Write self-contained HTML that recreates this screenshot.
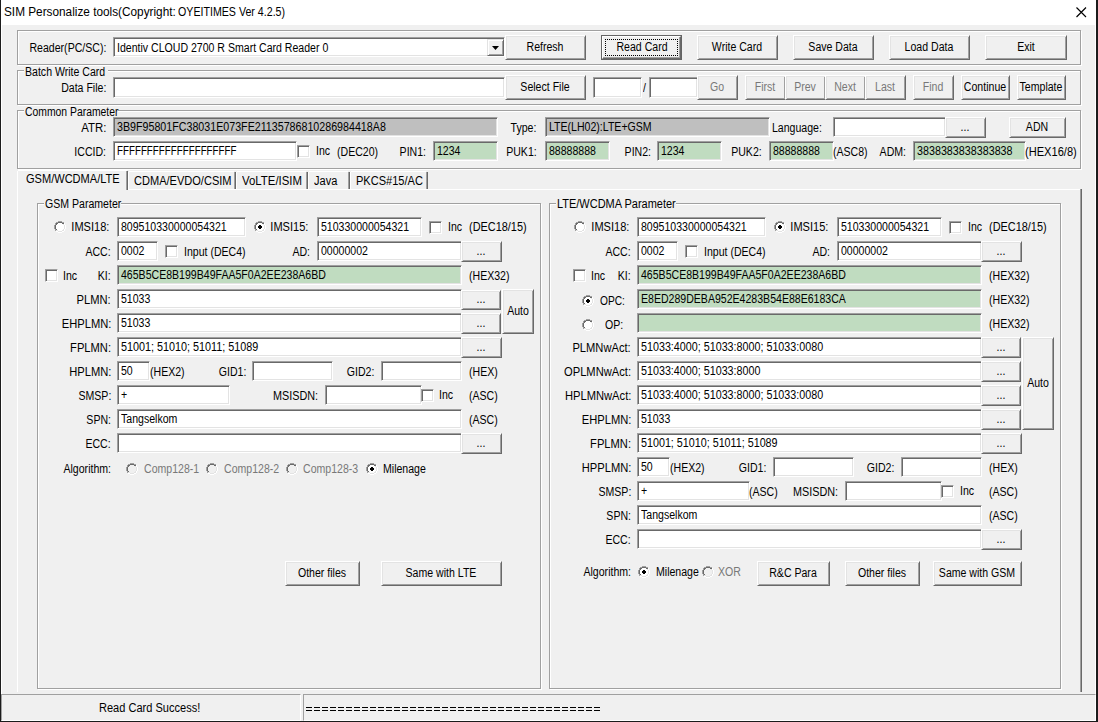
<!DOCTYPE html>
<html><head><meta charset="utf-8"><style>
html,body{margin:0;padding:0;width:1098px;height:722px;overflow:hidden;background:#f0f0f0}
body>div,body>svg{position:absolute;box-sizing:content-box}
.t{position:absolute;font-family:"Liberation Sans",sans-serif;font-size:12px;line-height:14px;white-space:pre;color:#000}
.c{text-align:center}
.tt{position:absolute;font-family:"Liberation Sans",sans-serif;font-size:12px;line-height:16px;white-space:pre;color:#000;transform:scaleX(0.937);transform-origin:0 0}
</style></head><body>
<div style="left:0px;top:0px;width:1098px;height:722px;background:#f0f0f0"></div>
<div style="left:0px;top:0px;width:1098px;height:25px;background:#fff"></div>
<div style="left:1px;top:25px;width:1px;height:669px;background:#fff"></div>
<div style="left:1095px;top:25px;width:1px;height:696px;background:#fff"></div>
<div class="tt" style="left:4px;top:4px;transform:scaleX(0.983)">SIM Personalize tools(Copyright: </div>
<div class="tt" style="left:178px;top:4px;transform:scaleX(0.887)">OYEITIMES Ver 4.2.5)</div>
<svg style="position:absolute;left:1076px;top:7px" width="11" height="11" viewBox="0 0 11 11"><path d="M0.5,0.5 L10,10 M10,0.5 L0.5,10" stroke="#000" stroke-width="1.15"/></svg>
<div style="left:18px;top:31px;width:1062px;height:33px;border:1px solid #ffffff"></div>
<div style="left:17px;top:30px;width:1062px;height:33px;border:1px solid #a0a0a0"></div>
<div class="t r" style="right:992px;top:41px;color:#000;transform:scaleX(0.88);transform-origin:100% 0">Reader(PC/SC):</div>
<div style="left:113px;top:37px;width:390px;height:18px;border:1px solid;border-color:#a0a0a0 #ffffff #ffffff #a0a0a0;background:#fff;box-shadow:inset 1px 1px #696969,inset -1px -1px #e3e3e3"></div>
<div class="t" style="left:117px;top:41px;color:#000;transform:scaleX(0.88);transform-origin:0 0">Identiv CLOUD 2700 R Smart Card Reader 0</div>
<div style="left:487px;top:39px;width:15px;height:15px;border:1px solid;border-color:#e3e3e3 #696969 #696969 #e3e3e3;background:#f0f0f0;box-shadow:inset 1px 1px #ffffff,inset -1px -1px #a0a0a0"></div>
<svg style="position:absolute;left:492px;top:46px" width="7" height="4" viewBox="0 0 7 4"><path d="M0,0 H7 L3.5,4 Z" fill="#000"/></svg>
<div style="left:505px;top:35px;width:79px;height:23px;border:1px solid;border-color:#ffffff #696969 #696969 #ffffff;background:#f0f0f0;box-shadow:inset 1px 1px #e3e3e3,inset -1px -1px #a0a0a0"></div>
<div class="t c" style="left:345px;width:400px;top:40px;color:#000;transform:scaleX(0.88);transform-origin:50% 0">Refresh</div>
<div style="left:601px;top:35px;width:79px;height:23px;border:1px solid #646464;background:#f0f0f0"></div>
<div style="left:602px;top:36px;width:77px;height:21px;border:1px solid;border-color:#ffffff #696969 #696969 #ffffff;box-shadow:inset -1px -1px #a0a0a0"></div>
<div style="left:605px;top:39px;width:71px;height:15px;border:1px dotted #000"></div>
<div class="t c" style="left:442px;width:400px;top:40px;color:#000;transform:scaleX(0.88);transform-origin:50% 0">Read Card</div>
<div style="left:697px;top:35px;width:79px;height:23px;border:1px solid;border-color:#ffffff #696969 #696969 #ffffff;background:#f0f0f0;box-shadow:inset 1px 1px #e3e3e3,inset -1px -1px #a0a0a0"></div>
<div class="t c" style="left:537px;width:400px;top:40px;color:#000;transform:scaleX(0.88);transform-origin:50% 0">Write Card</div>
<div style="left:793px;top:35px;width:79px;height:23px;border:1px solid;border-color:#ffffff #696969 #696969 #ffffff;background:#f0f0f0;box-shadow:inset 1px 1px #e3e3e3,inset -1px -1px #a0a0a0"></div>
<div class="t c" style="left:633px;width:400px;top:40px;color:#000;transform:scaleX(0.88);transform-origin:50% 0">Save Data</div>
<div style="left:889px;top:35px;width:79px;height:23px;border:1px solid;border-color:#ffffff #696969 #696969 #ffffff;background:#f0f0f0;box-shadow:inset 1px 1px #e3e3e3,inset -1px -1px #a0a0a0"></div>
<div class="t c" style="left:729px;width:400px;top:40px;color:#000;transform:scaleX(0.88);transform-origin:50% 0">Load Data</div>
<div style="left:985px;top:35px;width:80px;height:23px;border:1px solid;border-color:#ffffff #696969 #696969 #ffffff;background:#f0f0f0;box-shadow:inset 1px 1px #e3e3e3,inset -1px -1px #a0a0a0"></div>
<div class="t c" style="left:826px;width:400px;top:40px;color:#000;transform:scaleX(0.88);transform-origin:50% 0">Exit</div>
<div style="left:18px;top:71px;width:1062px;height:33px;border:1px solid #ffffff"></div>
<div style="left:17px;top:70px;width:1062px;height:33px;border:1px solid #a0a0a0"></div>
<div style="left:24px;top:69px;width:84px;height:4px;background:#f0f0f0"></div>
<div class="t" style="left:25px;top:65px;color:#000;transform:scaleX(0.88);transform-origin:0 0">Batch Write Card</div>
<div class="t r" style="right:992px;top:81px;color:#000;transform:scaleX(0.88);transform-origin:100% 0">Data File:</div>
<div style="left:113px;top:77px;width:390px;height:19px;border:1px solid;border-color:#a0a0a0 #ffffff #ffffff #a0a0a0;background:#fff;box-shadow:inset 1px 1px #696969,inset -1px -1px #e3e3e3"></div>
<div style="left:505px;top:75px;width:79px;height:23px;border:1px solid;border-color:#ffffff #696969 #696969 #ffffff;background:#f0f0f0;box-shadow:inset 1px 1px #e3e3e3,inset -1px -1px #a0a0a0"></div>
<div class="t c" style="left:345px;width:400px;top:80px;color:#000;transform:scaleX(0.88);transform-origin:50% 0">Select File</div>
<div style="left:593px;top:77px;width:47px;height:19px;border:1px solid;border-color:#a0a0a0 #ffffff #ffffff #a0a0a0;background:#fff;box-shadow:inset 1px 1px #696969,inset -1px -1px #e3e3e3"></div>
<div class="t" style="left:643px;top:81px;color:#000;transform:scaleX(0.88);transform-origin:0 0">/</div>
<div style="left:649px;top:77px;width:47px;height:19px;border:1px solid;border-color:#a0a0a0 #ffffff #ffffff #a0a0a0;background:#fff;box-shadow:inset 1px 1px #696969,inset -1px -1px #e3e3e3"></div>
<div style="left:697px;top:75px;width:39px;height:23px;border:1px solid;border-color:#ffffff #696969 #696969 #ffffff;background:#f0f0f0;box-shadow:inset 1px 1px #e3e3e3,inset -1px -1px #a0a0a0"></div>
<div class="t c" style="left:517px;width:400px;top:80px;color:#787878;transform:scaleX(0.88);transform-origin:50% 0">Go</div>
<div style="left:745px;top:75px;width:39px;height:23px;border:1px solid;border-color:#ffffff #696969 #696969 #ffffff;background:#f0f0f0;box-shadow:inset 1px 1px #e3e3e3,inset -1px -1px #a0a0a0"></div>
<div class="t c" style="left:565px;width:400px;top:80px;color:#787878;transform:scaleX(0.88);transform-origin:50% 0">First</div>
<div style="left:785px;top:75px;width:39px;height:23px;border:1px solid;border-color:#ffffff #696969 #696969 #ffffff;background:#f0f0f0;box-shadow:inset 1px 1px #e3e3e3,inset -1px -1px #a0a0a0"></div>
<div class="t c" style="left:605px;width:400px;top:80px;color:#787878;transform:scaleX(0.88);transform-origin:50% 0">Prev</div>
<div style="left:825px;top:75px;width:39px;height:23px;border:1px solid;border-color:#ffffff #696969 #696969 #ffffff;background:#f0f0f0;box-shadow:inset 1px 1px #e3e3e3,inset -1px -1px #a0a0a0"></div>
<div class="t c" style="left:645px;width:400px;top:80px;color:#787878;transform:scaleX(0.88);transform-origin:50% 0">Next</div>
<div style="left:865px;top:75px;width:39px;height:23px;border:1px solid;border-color:#ffffff #696969 #696969 #ffffff;background:#f0f0f0;box-shadow:inset 1px 1px #e3e3e3,inset -1px -1px #a0a0a0"></div>
<div class="t c" style="left:685px;width:400px;top:80px;color:#787878;transform:scaleX(0.88);transform-origin:50% 0">Last</div>
<div style="left:913px;top:75px;width:39px;height:23px;border:1px solid;border-color:#ffffff #696969 #696969 #ffffff;background:#f0f0f0;box-shadow:inset 1px 1px #e3e3e3,inset -1px -1px #a0a0a0"></div>
<div class="t c" style="left:733px;width:400px;top:80px;color:#787878;transform:scaleX(0.88);transform-origin:50% 0">Find</div>
<div style="left:961px;top:75px;width:47px;height:23px;border:1px solid;border-color:#ffffff #696969 #696969 #ffffff;background:#f0f0f0;box-shadow:inset 1px 1px #e3e3e3,inset -1px -1px #a0a0a0"></div>
<div class="t c" style="left:785px;width:400px;top:80px;color:#000;transform:scaleX(0.88);transform-origin:50% 0">Continue</div>
<div style="left:1017px;top:75px;width:47px;height:23px;border:1px solid;border-color:#ffffff #696969 #696969 #ffffff;background:#f0f0f0;box-shadow:inset 1px 1px #e3e3e3,inset -1px -1px #a0a0a0"></div>
<div class="t c" style="left:841px;width:400px;top:80px;color:#000;transform:scaleX(0.88);transform-origin:50% 0">Template</div>
<div style="left:18px;top:111px;width:1062px;height:57px;border:1px solid #ffffff"></div>
<div style="left:17px;top:110px;width:1062px;height:57px;border:1px solid #a0a0a0"></div>
<div style="left:24px;top:109px;width:94px;height:4px;background:#f0f0f0"></div>
<div class="t" style="left:25px;top:105px;color:#000;transform:scaleX(0.865);transform-origin:0 0">Common Parameter</div>
<div class="t r" style="right:992px;top:121px;color:#000;transform:scaleX(0.95);transform-origin:100% 0">ATR:</div>
<div style="left:113px;top:117px;width:383px;height:18px;border:1px solid;border-color:#a0a0a0 #ffffff #ffffff #a0a0a0;background:#bfbfbf;box-shadow:inset 1px 1px #696969,inset -1px -1px #e3e3e3"></div>
<div class="t" style="left:117px;top:120px;color:#000;transform:scaleX(0.89);transform-origin:0 0">3B9F95801FC38031E073FE21135786810286984418A8</div>
<div class="t r" style="right:562px;top:121px;color:#000;transform:scaleX(0.88);transform-origin:100% 0">Type:</div>
<div style="left:545px;top:117px;width:223px;height:18px;border:1px solid;border-color:#a0a0a0 #ffffff #ffffff #a0a0a0;background:#bfbfbf;box-shadow:inset 1px 1px #696969,inset -1px -1px #e3e3e3"></div>
<div class="t" style="left:549px;top:120px;color:#000;transform:scaleX(0.88);transform-origin:0 0">LTE(LH02):LTE+GSM</div>
<div class="t" style="left:772px;top:121px;color:#000;transform:scaleX(0.88);transform-origin:0 0">Language:</div>
<div style="left:833px;top:117px;width:111px;height:18px;border:1px solid;border-color:#a0a0a0 #ffffff #ffffff #a0a0a0;background:#fff;box-shadow:inset 1px 1px #696969,inset -1px -1px #e3e3e3"></div>
<div style="left:945px;top:117px;width:39px;height:19px;border:1px solid;border-color:#ffffff #696969 #696969 #ffffff;background:#f0f0f0;box-shadow:inset 1px 1px #e3e3e3,inset -1px -1px #a0a0a0"></div>
<div class="t c" style="left:765px;width:400px;top:120px;color:#000;transform:scaleX(0.88);transform-origin:50% 0">...</div>
<div style="left:1009px;top:117px;width:55px;height:19px;border:1px solid;border-color:#ffffff #696969 #696969 #ffffff;background:#f0f0f0;box-shadow:inset 1px 1px #e3e3e3,inset -1px -1px #a0a0a0"></div>
<div class="t c" style="left:837px;width:400px;top:120px;color:#000;transform:scaleX(0.88);transform-origin:50% 0">ADN</div>
<div class="t r" style="right:992px;top:145px;color:#000;transform:scaleX(0.88);transform-origin:100% 0">ICCID:</div>
<div style="left:113px;top:141px;width:182px;height:18px;border:1px solid;border-color:#a0a0a0 #ffffff #ffffff #a0a0a0;background:#fff;box-shadow:inset 1px 1px #696969,inset -1px -1px #e3e3e3"></div>
<div class="t" style="left:117px;top:144px;color:#000;transform:scaleX(0.815);transform-origin:0 0">FFFFFFFFFFFFFFFFFFFF</div>
<div style="left:297px;top:145px;width:11px;height:11px;border:1px solid;border-color:#a0a0a0 #ffffff #ffffff #a0a0a0;background:#fff;box-shadow:inset 1px 1px #696969,inset -1px -1px #e3e3e3"></div>
<div class="t" style="left:316px;top:144px;color:#000;transform:scaleX(0.88);transform-origin:0 0">Inc</div>
<div class="t" style="left:337px;top:145px;color:#000;transform:scaleX(0.88);transform-origin:0 0">(DEC20)</div>
<div class="t r" style="right:672px;top:145px;color:#000;transform:scaleX(0.88);transform-origin:100% 0">PIN1:</div>
<div style="left:433px;top:141px;width:63px;height:18px;border:1px solid;border-color:#a0a0a0 #ffffff #ffffff #a0a0a0;background:#c0dcc0;box-shadow:inset 1px 1px #696969,inset -1px -1px #e3e3e3"></div>
<div class="t" style="left:437px;top:144px;color:#000;transform:scaleX(0.88);transform-origin:0 0">1234</div>
<div class="t r" style="right:561px;top:145px;color:#000;transform:scaleX(0.88);transform-origin:100% 0">PUK1:</div>
<div style="left:545px;top:141px;width:63px;height:18px;border:1px solid;border-color:#a0a0a0 #ffffff #ffffff #a0a0a0;background:#c0dcc0;box-shadow:inset 1px 1px #696969,inset -1px -1px #e3e3e3"></div>
<div class="t" style="left:549px;top:144px;color:#000;transform:scaleX(0.88);transform-origin:0 0">88888888</div>
<div class="t r" style="right:447px;top:145px;color:#000;transform:scaleX(0.88);transform-origin:100% 0">PIN2:</div>
<div style="left:657px;top:141px;width:63px;height:18px;border:1px solid;border-color:#a0a0a0 #ffffff #ffffff #a0a0a0;background:#c0dcc0;box-shadow:inset 1px 1px #696969,inset -1px -1px #e3e3e3"></div>
<div class="t" style="left:661px;top:144px;color:#000;transform:scaleX(0.88);transform-origin:0 0">1234</div>
<div class="t r" style="right:336px;top:145px;color:#000;transform:scaleX(0.88);transform-origin:100% 0">PUK2:</div>
<div style="left:769px;top:141px;width:63px;height:18px;border:1px solid;border-color:#a0a0a0 #ffffff #ffffff #a0a0a0;background:#c0dcc0;box-shadow:inset 1px 1px #696969,inset -1px -1px #e3e3e3"></div>
<div class="t" style="left:773px;top:144px;color:#000;transform:scaleX(0.88);transform-origin:0 0">88888888</div>
<div class="t" style="left:833px;top:145px;color:#000;transform:scaleX(0.88);transform-origin:0 0">(ASC8)</div>
<div class="t r" style="right:192px;top:145px;color:#000;transform:scaleX(0.88);transform-origin:100% 0">ADM:</div>
<div style="left:913px;top:141px;width:111px;height:18px;border:1px solid;border-color:#a0a0a0 #ffffff #ffffff #a0a0a0;background:#c0dcc0;box-shadow:inset 1px 1px #696969,inset -1px -1px #e3e3e3"></div>
<div class="t" style="left:917px;top:144px;color:#000;transform:scaleX(0.895);transform-origin:0 0">3838383838383838</div>
<div class="t" style="left:1025px;top:145px;color:#000;transform:scaleX(0.925);transform-origin:0 0">(HEX16/8)</div>
<div style="left:17px;top:189px;width:1064px;height:1px;background:#ffffff"></div>
<div style="left:17px;top:189px;width:1px;height:503px;background:#ffffff"></div>
<div style="left:1080px;top:189px;width:1px;height:503px;background:#a0a0a0"></div>
<div style="left:1081px;top:189px;width:1px;height:503px;background:#696969"></div>
<div style="left:129px;top:171px;width:105px;height:1px;background:#ffffff"></div>
<div style="left:128px;top:172px;width:1px;height:17px;background:#ffffff"></div>
<div style="left:234px;top:172px;width:1px;height:17px;background:#a0a0a0"></div>
<div style="left:235px;top:172px;width:1px;height:17px;background:#696969"></div>
<div class="t" style="left:134px;top:174px;color:#000;transform:scaleX(0.92);transform-origin:0 0">CDMA/EVDO/CSIM</div>
<div style="left:237px;top:171px;width:69px;height:1px;background:#ffffff"></div>
<div style="left:236px;top:172px;width:1px;height:17px;background:#ffffff"></div>
<div style="left:306px;top:172px;width:1px;height:17px;background:#a0a0a0"></div>
<div style="left:307px;top:172px;width:1px;height:17px;background:#696969"></div>
<div class="t" style="left:242px;top:174px;color:#000;transform:scaleX(0.95);transform-origin:0 0">VoLTE/ISIM</div>
<div style="left:309px;top:171px;width:39px;height:1px;background:#ffffff"></div>
<div style="left:308px;top:172px;width:1px;height:17px;background:#ffffff"></div>
<div style="left:348px;top:172px;width:1px;height:17px;background:#a0a0a0"></div>
<div style="left:349px;top:172px;width:1px;height:17px;background:#696969"></div>
<div class="t" style="left:314px;top:174px;color:#000;transform:scaleX(0.92);transform-origin:0 0">Java</div>
<div style="left:351px;top:171px;width:75px;height:1px;background:#ffffff"></div>
<div style="left:350px;top:172px;width:1px;height:17px;background:#ffffff"></div>
<div style="left:426px;top:172px;width:1px;height:17px;background:#a0a0a0"></div>
<div style="left:427px;top:172px;width:1px;height:17px;background:#696969"></div>
<div class="t" style="left:356px;top:174px;color:#000;transform:scaleX(0.92);transform-origin:0 0">PKCS#15/AC</div>
<div style="left:17px;top:170px;width:111px;height:20px;background:#f0f0f0"></div>
<div style="left:18px;top:170px;width:109px;height:1px;background:#ffffff"></div>
<div style="left:17px;top:171px;width:1px;height:19px;background:#ffffff"></div>
<div style="left:126px;top:171px;width:1px;height:19px;background:#a0a0a0"></div>
<div style="left:127px;top:171px;width:1px;height:19px;background:#696969"></div>
<div class="t" style="left:26px;top:172px;color:#000;transform:scaleX(0.92);transform-origin:0 0">GSM/WCDMA/LTE</div>
<div style="left:38px;top:204px;width:502px;height:484px;border:1px solid #ffffff"></div>
<div style="left:37px;top:203px;width:502px;height:484px;border:1px solid #a0a0a0"></div>
<div style="left:44px;top:202px;width:77px;height:4px;background:#f0f0f0"></div>
<div class="t" style="left:45px;top:197px;color:#000;transform:scaleX(0.88);transform-origin:0 0">GSM Parameter</div>
<div style="left:550px;top:204px;width:510px;height:484px;border:1px solid #ffffff"></div>
<div style="left:549px;top:203px;width:510px;height:484px;border:1px solid #a0a0a0"></div>
<div style="left:556px;top:202px;width:120px;height:4px;background:#f0f0f0"></div>
<div class="t" style="left:557px;top:197px;color:#000;transform:scaleX(0.915);transform-origin:0 0">LTE/WCDMA Parameter</div>
<svg style="position:absolute;left:54px;top:221px" width="12" height="12" shape-rendering="crispEdges"><rect x="4" y="0" width="4" height="1" fill="#a0a0a0"/><rect x="2" y="1" width="2" height="1" fill="#a0a0a0"/><rect x="4" y="1" width="4" height="1" fill="#696969"/><rect x="8" y="1" width="2" height="1" fill="#a0a0a0"/><rect x="1" y="2" width="1" height="1" fill="#a0a0a0"/><rect x="2" y="2" width="2" height="1" fill="#696969"/><rect x="4" y="2" width="4" height="1" fill="#fff"/><rect x="8" y="2" width="2" height="1" fill="#696969"/><rect x="10" y="2" width="1" height="1" fill="#ffffff"/><rect x="1" y="3" width="1" height="1" fill="#a0a0a0"/><rect x="2" y="3" width="1" height="1" fill="#696969"/><rect x="3" y="3" width="6" height="1" fill="#fff"/><rect x="9" y="3" width="1" height="1" fill="#e3e3e3"/><rect x="10" y="3" width="1" height="1" fill="#ffffff"/><rect x="0" y="4" width="1" height="1" fill="#a0a0a0"/><rect x="1" y="4" width="1" height="1" fill="#696969"/><rect x="2" y="4" width="8" height="1" fill="#fff"/><rect x="10" y="4" width="1" height="1" fill="#e3e3e3"/><rect x="11" y="4" width="1" height="1" fill="#ffffff"/><rect x="0" y="5" width="1" height="1" fill="#a0a0a0"/><rect x="1" y="5" width="1" height="1" fill="#696969"/><rect x="2" y="5" width="8" height="1" fill="#fff"/><rect x="10" y="5" width="1" height="1" fill="#e3e3e3"/><rect x="11" y="5" width="1" height="1" fill="#ffffff"/><rect x="0" y="6" width="1" height="1" fill="#a0a0a0"/><rect x="1" y="6" width="1" height="1" fill="#696969"/><rect x="2" y="6" width="8" height="1" fill="#fff"/><rect x="10" y="6" width="1" height="1" fill="#e3e3e3"/><rect x="11" y="6" width="1" height="1" fill="#ffffff"/><rect x="0" y="7" width="1" height="1" fill="#a0a0a0"/><rect x="1" y="7" width="1" height="1" fill="#696969"/><rect x="2" y="7" width="8" height="1" fill="#fff"/><rect x="10" y="7" width="1" height="1" fill="#e3e3e3"/><rect x="11" y="7" width="1" height="1" fill="#ffffff"/><rect x="1" y="8" width="1" height="1" fill="#a0a0a0"/><rect x="2" y="8" width="1" height="1" fill="#696969"/><rect x="3" y="8" width="6" height="1" fill="#fff"/><rect x="9" y="8" width="1" height="1" fill="#e3e3e3"/><rect x="10" y="8" width="1" height="1" fill="#ffffff"/><rect x="1" y="9" width="1" height="1" fill="#a0a0a0"/><rect x="2" y="9" width="2" height="1" fill="#e3e3e3"/><rect x="4" y="9" width="4" height="1" fill="#fff"/><rect x="8" y="9" width="2" height="1" fill="#e3e3e3"/><rect x="10" y="9" width="1" height="1" fill="#ffffff"/><rect x="2" y="10" width="2" height="1" fill="#ffffff"/><rect x="4" y="10" width="4" height="1" fill="#e3e3e3"/><rect x="8" y="10" width="2" height="1" fill="#ffffff"/><rect x="4" y="11" width="4" height="1" fill="#ffffff"/></svg>
<div class="t r" style="right:989px;top:220px;color:#000;transform:scaleX(0.92);transform-origin:100% 0">IMSI18:</div>
<div style="left:117px;top:217px;width:127px;height:18px;border:1px solid;border-color:#a0a0a0 #ffffff #ffffff #a0a0a0;background:#fff;box-shadow:inset 1px 1px #696969,inset -1px -1px #e3e3e3"></div>
<div class="t" style="left:121px;top:220px;color:#000;transform:scaleX(0.88);transform-origin:0 0">809510330000054321</div>
<svg style="position:absolute;left:254px;top:221px" width="12" height="12" shape-rendering="crispEdges"><rect x="4" y="0" width="4" height="1" fill="#a0a0a0"/><rect x="2" y="1" width="2" height="1" fill="#a0a0a0"/><rect x="4" y="1" width="4" height="1" fill="#696969"/><rect x="8" y="1" width="2" height="1" fill="#a0a0a0"/><rect x="1" y="2" width="1" height="1" fill="#a0a0a0"/><rect x="2" y="2" width="2" height="1" fill="#696969"/><rect x="4" y="2" width="4" height="1" fill="#fff"/><rect x="8" y="2" width="2" height="1" fill="#696969"/><rect x="10" y="2" width="1" height="1" fill="#ffffff"/><rect x="1" y="3" width="1" height="1" fill="#a0a0a0"/><rect x="2" y="3" width="1" height="1" fill="#696969"/><rect x="3" y="3" width="6" height="1" fill="#fff"/><rect x="9" y="3" width="1" height="1" fill="#e3e3e3"/><rect x="10" y="3" width="1" height="1" fill="#ffffff"/><rect x="0" y="4" width="1" height="1" fill="#a0a0a0"/><rect x="1" y="4" width="1" height="1" fill="#696969"/><rect x="2" y="4" width="8" height="1" fill="#fff"/><rect x="10" y="4" width="1" height="1" fill="#e3e3e3"/><rect x="11" y="4" width="1" height="1" fill="#ffffff"/><rect x="0" y="5" width="1" height="1" fill="#a0a0a0"/><rect x="1" y="5" width="1" height="1" fill="#696969"/><rect x="2" y="5" width="8" height="1" fill="#fff"/><rect x="10" y="5" width="1" height="1" fill="#e3e3e3"/><rect x="11" y="5" width="1" height="1" fill="#ffffff"/><rect x="0" y="6" width="1" height="1" fill="#a0a0a0"/><rect x="1" y="6" width="1" height="1" fill="#696969"/><rect x="2" y="6" width="8" height="1" fill="#fff"/><rect x="10" y="6" width="1" height="1" fill="#e3e3e3"/><rect x="11" y="6" width="1" height="1" fill="#ffffff"/><rect x="0" y="7" width="1" height="1" fill="#a0a0a0"/><rect x="1" y="7" width="1" height="1" fill="#696969"/><rect x="2" y="7" width="8" height="1" fill="#fff"/><rect x="10" y="7" width="1" height="1" fill="#e3e3e3"/><rect x="11" y="7" width="1" height="1" fill="#ffffff"/><rect x="1" y="8" width="1" height="1" fill="#a0a0a0"/><rect x="2" y="8" width="1" height="1" fill="#696969"/><rect x="3" y="8" width="6" height="1" fill="#fff"/><rect x="9" y="8" width="1" height="1" fill="#e3e3e3"/><rect x="10" y="8" width="1" height="1" fill="#ffffff"/><rect x="1" y="9" width="1" height="1" fill="#a0a0a0"/><rect x="2" y="9" width="2" height="1" fill="#e3e3e3"/><rect x="4" y="9" width="4" height="1" fill="#fff"/><rect x="8" y="9" width="2" height="1" fill="#e3e3e3"/><rect x="10" y="9" width="1" height="1" fill="#ffffff"/><rect x="2" y="10" width="2" height="1" fill="#ffffff"/><rect x="4" y="10" width="4" height="1" fill="#e3e3e3"/><rect x="8" y="10" width="2" height="1" fill="#ffffff"/><rect x="4" y="11" width="4" height="1" fill="#ffffff"/><rect x="5" y="4" width="2" height="4" fill="#000"/><rect x="4" y="5" width="4" height="2" fill="#000"/></svg>
<div class="t r" style="right:790px;top:220px;color:#000;transform:scaleX(0.92);transform-origin:100% 0">IMSI15:</div>
<div style="left:317px;top:217px;width:103px;height:18px;border:1px solid;border-color:#a0a0a0 #ffffff #ffffff #a0a0a0;background:#fff;box-shadow:inset 1px 1px #696969,inset -1px -1px #e3e3e3"></div>
<div class="t" style="left:321px;top:220px;color:#000;transform:scaleX(0.88);transform-origin:0 0">510330000054321</div>
<div style="left:429px;top:221px;width:11px;height:11px;border:1px solid;border-color:#a0a0a0 #ffffff #ffffff #a0a0a0;background:#fff;box-shadow:inset 1px 1px #696969,inset -1px -1px #e3e3e3"></div>
<div class="t" style="left:448px;top:220px;color:#000;transform:scaleX(0.88);transform-origin:0 0">Inc</div>
<div class="t" style="left:469px;top:220px;color:#000;transform:scaleX(0.91);transform-origin:0 0">(DEC18/15)</div>
<div class="t r" style="right:987px;top:245px;color:#000;transform:scaleX(0.88);transform-origin:100% 0">ACC:</div>
<div style="left:117px;top:241px;width:39px;height:18px;border:1px solid;border-color:#a0a0a0 #ffffff #ffffff #a0a0a0;background:#fff;box-shadow:inset 1px 1px #696969,inset -1px -1px #e3e3e3"></div>
<div class="t" style="left:121px;top:244px;color:#000;transform:scaleX(0.88);transform-origin:0 0">0002</div>
<div style="left:165px;top:245px;width:11px;height:11px;border:1px solid;border-color:#a0a0a0 #ffffff #ffffff #a0a0a0;background:#fff;box-shadow:inset 1px 1px #696969,inset -1px -1px #e3e3e3"></div>
<div class="t" style="left:184px;top:245px;color:#000;transform:scaleX(0.88);transform-origin:0 0">Input (DEC4)</div>
<div class="t r" style="right:788px;top:245px;color:#000;transform:scaleX(0.88);transform-origin:100% 0">AD:</div>
<div style="left:317px;top:241px;width:143px;height:18px;border:1px solid;border-color:#a0a0a0 #ffffff #ffffff #a0a0a0;background:#fff;box-shadow:inset 1px 1px #696969,inset -1px -1px #e3e3e3"></div>
<div class="t" style="left:321px;top:244px;color:#000;transform:scaleX(0.88);transform-origin:0 0">00000002</div>
<div style="left:461px;top:241px;width:39px;height:19px;border:1px solid;border-color:#ffffff #696969 #696969 #ffffff;background:#f0f0f0;box-shadow:inset 1px 1px #e3e3e3,inset -1px -1px #a0a0a0"></div>
<div class="t c" style="left:281px;width:400px;top:244px;color:#000;transform:scaleX(0.88);transform-origin:50% 0">...</div>
<div style="left:45px;top:269px;width:11px;height:11px;border:1px solid;border-color:#a0a0a0 #ffffff #ffffff #a0a0a0;background:#fff;box-shadow:inset 1px 1px #696969,inset -1px -1px #e3e3e3"></div>
<div class="t" style="left:63px;top:269px;color:#000;transform:scaleX(0.88);transform-origin:0 0">Inc</div>
<div class="t r" style="right:987px;top:269px;color:#000;transform:scaleX(0.88);transform-origin:100% 0">KI:</div>
<div style="left:117px;top:265px;width:343px;height:18px;border:1px solid;border-color:#a0a0a0 #ffffff #ffffff #a0a0a0;background:#c0dcc0;box-shadow:inset 1px 1px #696969,inset -1px -1px #e3e3e3"></div>
<div class="t" style="left:121px;top:268px;color:#000;transform:scaleX(0.88);transform-origin:0 0">465B5CE8B199B49FAA5F0A2EE238A6BD</div>
<div class="t" style="left:469px;top:269px;color:#000;transform:scaleX(0.88);transform-origin:0 0">(HEX32)</div>
<div class="t r" style="right:987px;top:293px;color:#000;transform:scaleX(0.93);transform-origin:100% 0">PLMN:</div>
<div style="left:117px;top:289px;width:343px;height:18px;border:1px solid;border-color:#a0a0a0 #ffffff #ffffff #a0a0a0;background:#fff;box-shadow:inset 1px 1px #696969,inset -1px -1px #e3e3e3"></div>
<div class="t" style="left:121px;top:292px;color:#000;transform:scaleX(0.88);transform-origin:0 0">51033</div>
<div style="left:461px;top:290px;width:38px;height:18px;border:1px solid;border-color:#ffffff #696969 #696969 #ffffff;background:#f0f0f0;box-shadow:inset 1px 1px #e3e3e3,inset -1px -1px #a0a0a0"></div>
<div class="t c" style="left:281px;width:400px;top:292px;color:#000;transform:scaleX(0.88);transform-origin:50% 0">...</div>
<div class="t r" style="right:987px;top:317px;color:#000;transform:scaleX(0.93);transform-origin:100% 0">EHPLMN:</div>
<div style="left:117px;top:313px;width:343px;height:18px;border:1px solid;border-color:#a0a0a0 #ffffff #ffffff #a0a0a0;background:#fff;box-shadow:inset 1px 1px #696969,inset -1px -1px #e3e3e3"></div>
<div class="t" style="left:121px;top:316px;color:#000;transform:scaleX(0.88);transform-origin:0 0">51033</div>
<div style="left:461px;top:313px;width:38px;height:19px;border:1px solid;border-color:#ffffff #696969 #696969 #ffffff;background:#f0f0f0;box-shadow:inset 1px 1px #e3e3e3,inset -1px -1px #a0a0a0"></div>
<div class="t c" style="left:281px;width:400px;top:316px;color:#000;transform:scaleX(0.88);transform-origin:50% 0">...</div>
<div class="t r" style="right:987px;top:341px;color:#000;transform:scaleX(0.93);transform-origin:100% 0">FPLMN:</div>
<div style="left:117px;top:337px;width:343px;height:18px;border:1px solid;border-color:#a0a0a0 #ffffff #ffffff #a0a0a0;background:#fff;box-shadow:inset 1px 1px #696969,inset -1px -1px #e3e3e3"></div>
<div class="t" style="left:121px;top:340px;color:#000;transform:scaleX(0.9);transform-origin:0 0">51001; 51010; 51011; 51089</div>
<div style="left:461px;top:337px;width:39px;height:19px;border:1px solid;border-color:#ffffff #696969 #696969 #ffffff;background:#f0f0f0;box-shadow:inset 1px 1px #e3e3e3,inset -1px -1px #a0a0a0"></div>
<div class="t c" style="left:281px;width:400px;top:340px;color:#000;transform:scaleX(0.88);transform-origin:50% 0">...</div>
<div style="left:502px;top:289px;width:30px;height:43px;border:1px solid;border-color:#ffffff #696969 #696969 #ffffff;background:#f0f0f0;box-shadow:inset 1px 1px #e3e3e3,inset -1px -1px #a0a0a0"></div>
<div class="t c" style="left:318px;width:400px;top:304px;color:#000;transform:scaleX(0.88);transform-origin:50% 0">Auto</div>
<div class="t r" style="right:987px;top:365px;color:#000;transform:scaleX(0.93);transform-origin:100% 0">HPLMN:</div>
<div style="left:117px;top:361px;width:31px;height:18px;border:1px solid;border-color:#a0a0a0 #ffffff #ffffff #a0a0a0;background:#fff;box-shadow:inset 1px 1px #696969,inset -1px -1px #e3e3e3"></div>
<div class="t" style="left:121px;top:364px;color:#000;transform:scaleX(0.88);transform-origin:0 0">50</div>
<div class="t" style="left:150px;top:365px;color:#000;transform:scaleX(0.88);transform-origin:0 0">(HEX2)</div>
<div class="t r" style="right:852px;top:365px;color:#000;transform:scaleX(0.88);transform-origin:100% 0">GID1:</div>
<div style="left:252px;top:361px;width:79px;height:18px;border:1px solid;border-color:#a0a0a0 #ffffff #ffffff #a0a0a0;background:#fff;box-shadow:inset 1px 1px #696969,inset -1px -1px #e3e3e3"></div>
<div class="t r" style="right:724px;top:365px;color:#000;transform:scaleX(0.88);transform-origin:100% 0">GID2:</div>
<div style="left:381px;top:361px;width:79px;height:18px;border:1px solid;border-color:#a0a0a0 #ffffff #ffffff #a0a0a0;background:#fff;box-shadow:inset 1px 1px #696969,inset -1px -1px #e3e3e3"></div>
<div class="t" style="left:469px;top:365px;color:#000;transform:scaleX(0.88);transform-origin:0 0">(HEX)</div>
<div class="t r" style="right:987px;top:389px;color:#000;transform:scaleX(0.88);transform-origin:100% 0">SMSP:</div>
<div style="left:117px;top:385px;width:111px;height:18px;border:1px solid;border-color:#a0a0a0 #ffffff #ffffff #a0a0a0;background:#fff;box-shadow:inset 1px 1px #696969,inset -1px -1px #e3e3e3"></div>
<div class="t" style="left:121px;top:388px;color:#000;transform:scaleX(0.88);transform-origin:0 0">+</div>
<div class="t r" style="right:780px;top:389px;color:#000;transform:scaleX(0.9);transform-origin:100% 0">MSISDN:</div>
<div style="left:325px;top:385px;width:95px;height:18px;border:1px solid;border-color:#a0a0a0 #ffffff #ffffff #a0a0a0;background:#fff;box-shadow:inset 1px 1px #696969,inset -1px -1px #e3e3e3"></div>
<div style="left:421px;top:389px;width:11px;height:11px;border:1px solid;border-color:#a0a0a0 #ffffff #ffffff #a0a0a0;background:#fff;box-shadow:inset 1px 1px #696969,inset -1px -1px #e3e3e3"></div>
<div class="t" style="left:439px;top:388px;color:#000;transform:scaleX(0.88);transform-origin:0 0">Inc</div>
<div class="t" style="left:469px;top:389px;color:#000;transform:scaleX(0.88);transform-origin:0 0">(ASC)</div>
<div class="t r" style="right:987px;top:413px;color:#000;transform:scaleX(0.88);transform-origin:100% 0">SPN:</div>
<div style="left:117px;top:409px;width:343px;height:18px;border:1px solid;border-color:#a0a0a0 #ffffff #ffffff #a0a0a0;background:#fff;box-shadow:inset 1px 1px #696969,inset -1px -1px #e3e3e3"></div>
<div class="t" style="left:121px;top:412px;color:#000;transform:scaleX(0.88);transform-origin:0 0">Tangselkom</div>
<div class="t" style="left:469px;top:413px;color:#000;transform:scaleX(0.88);transform-origin:0 0">(ASC)</div>
<div class="t r" style="right:987px;top:437px;color:#000;transform:scaleX(0.88);transform-origin:100% 0">ECC:</div>
<div style="left:117px;top:433px;width:343px;height:18px;border:1px solid;border-color:#a0a0a0 #ffffff #ffffff #a0a0a0;background:#fff;box-shadow:inset 1px 1px #696969,inset -1px -1px #e3e3e3"></div>
<div style="left:461px;top:433px;width:39px;height:19px;border:1px solid;border-color:#ffffff #696969 #696969 #ffffff;background:#f0f0f0;box-shadow:inset 1px 1px #e3e3e3,inset -1px -1px #a0a0a0"></div>
<div class="t c" style="left:281px;width:400px;top:436px;color:#000;transform:scaleX(0.88);transform-origin:50% 0">...</div>
<div class="t r" style="right:987px;top:462px;color:#000;transform:scaleX(0.88);transform-origin:100% 0">Algorithm:</div>
<svg style="position:absolute;left:126px;top:463px" width="12" height="12" shape-rendering="crispEdges"><rect x="4" y="0" width="4" height="1" fill="#a0a0a0"/><rect x="2" y="1" width="2" height="1" fill="#a0a0a0"/><rect x="4" y="1" width="4" height="1" fill="#696969"/><rect x="8" y="1" width="2" height="1" fill="#a0a0a0"/><rect x="1" y="2" width="1" height="1" fill="#a0a0a0"/><rect x="2" y="2" width="2" height="1" fill="#696969"/><rect x="4" y="2" width="4" height="1" fill="#f0f0f0"/><rect x="8" y="2" width="2" height="1" fill="#696969"/><rect x="10" y="2" width="1" height="1" fill="#ffffff"/><rect x="1" y="3" width="1" height="1" fill="#a0a0a0"/><rect x="2" y="3" width="1" height="1" fill="#696969"/><rect x="3" y="3" width="6" height="1" fill="#f0f0f0"/><rect x="9" y="3" width="1" height="1" fill="#e3e3e3"/><rect x="10" y="3" width="1" height="1" fill="#ffffff"/><rect x="0" y="4" width="1" height="1" fill="#a0a0a0"/><rect x="1" y="4" width="1" height="1" fill="#696969"/><rect x="2" y="4" width="8" height="1" fill="#f0f0f0"/><rect x="10" y="4" width="1" height="1" fill="#e3e3e3"/><rect x="11" y="4" width="1" height="1" fill="#ffffff"/><rect x="0" y="5" width="1" height="1" fill="#a0a0a0"/><rect x="1" y="5" width="1" height="1" fill="#696969"/><rect x="2" y="5" width="8" height="1" fill="#f0f0f0"/><rect x="10" y="5" width="1" height="1" fill="#e3e3e3"/><rect x="11" y="5" width="1" height="1" fill="#ffffff"/><rect x="0" y="6" width="1" height="1" fill="#a0a0a0"/><rect x="1" y="6" width="1" height="1" fill="#696969"/><rect x="2" y="6" width="8" height="1" fill="#f0f0f0"/><rect x="10" y="6" width="1" height="1" fill="#e3e3e3"/><rect x="11" y="6" width="1" height="1" fill="#ffffff"/><rect x="0" y="7" width="1" height="1" fill="#a0a0a0"/><rect x="1" y="7" width="1" height="1" fill="#696969"/><rect x="2" y="7" width="8" height="1" fill="#f0f0f0"/><rect x="10" y="7" width="1" height="1" fill="#e3e3e3"/><rect x="11" y="7" width="1" height="1" fill="#ffffff"/><rect x="1" y="8" width="1" height="1" fill="#a0a0a0"/><rect x="2" y="8" width="1" height="1" fill="#696969"/><rect x="3" y="8" width="6" height="1" fill="#f0f0f0"/><rect x="9" y="8" width="1" height="1" fill="#e3e3e3"/><rect x="10" y="8" width="1" height="1" fill="#ffffff"/><rect x="1" y="9" width="1" height="1" fill="#a0a0a0"/><rect x="2" y="9" width="2" height="1" fill="#e3e3e3"/><rect x="4" y="9" width="4" height="1" fill="#f0f0f0"/><rect x="8" y="9" width="2" height="1" fill="#e3e3e3"/><rect x="10" y="9" width="1" height="1" fill="#ffffff"/><rect x="2" y="10" width="2" height="1" fill="#ffffff"/><rect x="4" y="10" width="4" height="1" fill="#e3e3e3"/><rect x="8" y="10" width="2" height="1" fill="#ffffff"/><rect x="4" y="11" width="4" height="1" fill="#ffffff"/></svg>
<div class="t" style="left:144px;top:462px;color:#787878;transform:scaleX(0.88);transform-origin:0 0">Comp128-1</div>
<svg style="position:absolute;left:206px;top:463px" width="12" height="12" shape-rendering="crispEdges"><rect x="4" y="0" width="4" height="1" fill="#a0a0a0"/><rect x="2" y="1" width="2" height="1" fill="#a0a0a0"/><rect x="4" y="1" width="4" height="1" fill="#696969"/><rect x="8" y="1" width="2" height="1" fill="#a0a0a0"/><rect x="1" y="2" width="1" height="1" fill="#a0a0a0"/><rect x="2" y="2" width="2" height="1" fill="#696969"/><rect x="4" y="2" width="4" height="1" fill="#f0f0f0"/><rect x="8" y="2" width="2" height="1" fill="#696969"/><rect x="10" y="2" width="1" height="1" fill="#ffffff"/><rect x="1" y="3" width="1" height="1" fill="#a0a0a0"/><rect x="2" y="3" width="1" height="1" fill="#696969"/><rect x="3" y="3" width="6" height="1" fill="#f0f0f0"/><rect x="9" y="3" width="1" height="1" fill="#e3e3e3"/><rect x="10" y="3" width="1" height="1" fill="#ffffff"/><rect x="0" y="4" width="1" height="1" fill="#a0a0a0"/><rect x="1" y="4" width="1" height="1" fill="#696969"/><rect x="2" y="4" width="8" height="1" fill="#f0f0f0"/><rect x="10" y="4" width="1" height="1" fill="#e3e3e3"/><rect x="11" y="4" width="1" height="1" fill="#ffffff"/><rect x="0" y="5" width="1" height="1" fill="#a0a0a0"/><rect x="1" y="5" width="1" height="1" fill="#696969"/><rect x="2" y="5" width="8" height="1" fill="#f0f0f0"/><rect x="10" y="5" width="1" height="1" fill="#e3e3e3"/><rect x="11" y="5" width="1" height="1" fill="#ffffff"/><rect x="0" y="6" width="1" height="1" fill="#a0a0a0"/><rect x="1" y="6" width="1" height="1" fill="#696969"/><rect x="2" y="6" width="8" height="1" fill="#f0f0f0"/><rect x="10" y="6" width="1" height="1" fill="#e3e3e3"/><rect x="11" y="6" width="1" height="1" fill="#ffffff"/><rect x="0" y="7" width="1" height="1" fill="#a0a0a0"/><rect x="1" y="7" width="1" height="1" fill="#696969"/><rect x="2" y="7" width="8" height="1" fill="#f0f0f0"/><rect x="10" y="7" width="1" height="1" fill="#e3e3e3"/><rect x="11" y="7" width="1" height="1" fill="#ffffff"/><rect x="1" y="8" width="1" height="1" fill="#a0a0a0"/><rect x="2" y="8" width="1" height="1" fill="#696969"/><rect x="3" y="8" width="6" height="1" fill="#f0f0f0"/><rect x="9" y="8" width="1" height="1" fill="#e3e3e3"/><rect x="10" y="8" width="1" height="1" fill="#ffffff"/><rect x="1" y="9" width="1" height="1" fill="#a0a0a0"/><rect x="2" y="9" width="2" height="1" fill="#e3e3e3"/><rect x="4" y="9" width="4" height="1" fill="#f0f0f0"/><rect x="8" y="9" width="2" height="1" fill="#e3e3e3"/><rect x="10" y="9" width="1" height="1" fill="#ffffff"/><rect x="2" y="10" width="2" height="1" fill="#ffffff"/><rect x="4" y="10" width="4" height="1" fill="#e3e3e3"/><rect x="8" y="10" width="2" height="1" fill="#ffffff"/><rect x="4" y="11" width="4" height="1" fill="#ffffff"/></svg>
<div class="t" style="left:224px;top:462px;color:#787878;transform:scaleX(0.88);transform-origin:0 0">Comp128-2</div>
<svg style="position:absolute;left:286px;top:463px" width="12" height="12" shape-rendering="crispEdges"><rect x="4" y="0" width="4" height="1" fill="#a0a0a0"/><rect x="2" y="1" width="2" height="1" fill="#a0a0a0"/><rect x="4" y="1" width="4" height="1" fill="#696969"/><rect x="8" y="1" width="2" height="1" fill="#a0a0a0"/><rect x="1" y="2" width="1" height="1" fill="#a0a0a0"/><rect x="2" y="2" width="2" height="1" fill="#696969"/><rect x="4" y="2" width="4" height="1" fill="#f0f0f0"/><rect x="8" y="2" width="2" height="1" fill="#696969"/><rect x="10" y="2" width="1" height="1" fill="#ffffff"/><rect x="1" y="3" width="1" height="1" fill="#a0a0a0"/><rect x="2" y="3" width="1" height="1" fill="#696969"/><rect x="3" y="3" width="6" height="1" fill="#f0f0f0"/><rect x="9" y="3" width="1" height="1" fill="#e3e3e3"/><rect x="10" y="3" width="1" height="1" fill="#ffffff"/><rect x="0" y="4" width="1" height="1" fill="#a0a0a0"/><rect x="1" y="4" width="1" height="1" fill="#696969"/><rect x="2" y="4" width="8" height="1" fill="#f0f0f0"/><rect x="10" y="4" width="1" height="1" fill="#e3e3e3"/><rect x="11" y="4" width="1" height="1" fill="#ffffff"/><rect x="0" y="5" width="1" height="1" fill="#a0a0a0"/><rect x="1" y="5" width="1" height="1" fill="#696969"/><rect x="2" y="5" width="8" height="1" fill="#f0f0f0"/><rect x="10" y="5" width="1" height="1" fill="#e3e3e3"/><rect x="11" y="5" width="1" height="1" fill="#ffffff"/><rect x="0" y="6" width="1" height="1" fill="#a0a0a0"/><rect x="1" y="6" width="1" height="1" fill="#696969"/><rect x="2" y="6" width="8" height="1" fill="#f0f0f0"/><rect x="10" y="6" width="1" height="1" fill="#e3e3e3"/><rect x="11" y="6" width="1" height="1" fill="#ffffff"/><rect x="0" y="7" width="1" height="1" fill="#a0a0a0"/><rect x="1" y="7" width="1" height="1" fill="#696969"/><rect x="2" y="7" width="8" height="1" fill="#f0f0f0"/><rect x="10" y="7" width="1" height="1" fill="#e3e3e3"/><rect x="11" y="7" width="1" height="1" fill="#ffffff"/><rect x="1" y="8" width="1" height="1" fill="#a0a0a0"/><rect x="2" y="8" width="1" height="1" fill="#696969"/><rect x="3" y="8" width="6" height="1" fill="#f0f0f0"/><rect x="9" y="8" width="1" height="1" fill="#e3e3e3"/><rect x="10" y="8" width="1" height="1" fill="#ffffff"/><rect x="1" y="9" width="1" height="1" fill="#a0a0a0"/><rect x="2" y="9" width="2" height="1" fill="#e3e3e3"/><rect x="4" y="9" width="4" height="1" fill="#f0f0f0"/><rect x="8" y="9" width="2" height="1" fill="#e3e3e3"/><rect x="10" y="9" width="1" height="1" fill="#ffffff"/><rect x="2" y="10" width="2" height="1" fill="#ffffff"/><rect x="4" y="10" width="4" height="1" fill="#e3e3e3"/><rect x="8" y="10" width="2" height="1" fill="#ffffff"/><rect x="4" y="11" width="4" height="1" fill="#ffffff"/></svg>
<div class="t" style="left:303px;top:462px;color:#787878;transform:scaleX(0.88);transform-origin:0 0">Comp128-3</div>
<svg style="position:absolute;left:366px;top:463px" width="12" height="12" shape-rendering="crispEdges"><rect x="4" y="0" width="4" height="1" fill="#a0a0a0"/><rect x="2" y="1" width="2" height="1" fill="#a0a0a0"/><rect x="4" y="1" width="4" height="1" fill="#696969"/><rect x="8" y="1" width="2" height="1" fill="#a0a0a0"/><rect x="1" y="2" width="1" height="1" fill="#a0a0a0"/><rect x="2" y="2" width="2" height="1" fill="#696969"/><rect x="4" y="2" width="4" height="1" fill="#fff"/><rect x="8" y="2" width="2" height="1" fill="#696969"/><rect x="10" y="2" width="1" height="1" fill="#ffffff"/><rect x="1" y="3" width="1" height="1" fill="#a0a0a0"/><rect x="2" y="3" width="1" height="1" fill="#696969"/><rect x="3" y="3" width="6" height="1" fill="#fff"/><rect x="9" y="3" width="1" height="1" fill="#e3e3e3"/><rect x="10" y="3" width="1" height="1" fill="#ffffff"/><rect x="0" y="4" width="1" height="1" fill="#a0a0a0"/><rect x="1" y="4" width="1" height="1" fill="#696969"/><rect x="2" y="4" width="8" height="1" fill="#fff"/><rect x="10" y="4" width="1" height="1" fill="#e3e3e3"/><rect x="11" y="4" width="1" height="1" fill="#ffffff"/><rect x="0" y="5" width="1" height="1" fill="#a0a0a0"/><rect x="1" y="5" width="1" height="1" fill="#696969"/><rect x="2" y="5" width="8" height="1" fill="#fff"/><rect x="10" y="5" width="1" height="1" fill="#e3e3e3"/><rect x="11" y="5" width="1" height="1" fill="#ffffff"/><rect x="0" y="6" width="1" height="1" fill="#a0a0a0"/><rect x="1" y="6" width="1" height="1" fill="#696969"/><rect x="2" y="6" width="8" height="1" fill="#fff"/><rect x="10" y="6" width="1" height="1" fill="#e3e3e3"/><rect x="11" y="6" width="1" height="1" fill="#ffffff"/><rect x="0" y="7" width="1" height="1" fill="#a0a0a0"/><rect x="1" y="7" width="1" height="1" fill="#696969"/><rect x="2" y="7" width="8" height="1" fill="#fff"/><rect x="10" y="7" width="1" height="1" fill="#e3e3e3"/><rect x="11" y="7" width="1" height="1" fill="#ffffff"/><rect x="1" y="8" width="1" height="1" fill="#a0a0a0"/><rect x="2" y="8" width="1" height="1" fill="#696969"/><rect x="3" y="8" width="6" height="1" fill="#fff"/><rect x="9" y="8" width="1" height="1" fill="#e3e3e3"/><rect x="10" y="8" width="1" height="1" fill="#ffffff"/><rect x="1" y="9" width="1" height="1" fill="#a0a0a0"/><rect x="2" y="9" width="2" height="1" fill="#e3e3e3"/><rect x="4" y="9" width="4" height="1" fill="#fff"/><rect x="8" y="9" width="2" height="1" fill="#e3e3e3"/><rect x="10" y="9" width="1" height="1" fill="#ffffff"/><rect x="2" y="10" width="2" height="1" fill="#ffffff"/><rect x="4" y="10" width="4" height="1" fill="#e3e3e3"/><rect x="8" y="10" width="2" height="1" fill="#ffffff"/><rect x="4" y="11" width="4" height="1" fill="#ffffff"/><rect x="5" y="4" width="2" height="4" fill="#000"/><rect x="4" y="5" width="4" height="2" fill="#000"/></svg>
<div class="t" style="left:383px;top:462px;color:#000;transform:scaleX(0.88);transform-origin:0 0">Milenage</div>
<div style="left:285px;top:561px;width:73px;height:23px;border:1px solid;border-color:#ffffff #696969 #696969 #ffffff;background:#f0f0f0;box-shadow:inset 1px 1px #e3e3e3,inset -1px -1px #a0a0a0"></div>
<div class="t c" style="left:122px;width:400px;top:566px;color:#000;transform:scaleX(0.88);transform-origin:50% 0">Other files</div>
<div style="left:381px;top:561px;width:119px;height:23px;border:1px solid;border-color:#ffffff #696969 #696969 #ffffff;background:#f0f0f0;box-shadow:inset 1px 1px #e3e3e3,inset -1px -1px #a0a0a0"></div>
<div class="t c" style="left:241px;width:400px;top:566px;color:#000;transform:scaleX(0.88);transform-origin:50% 0">Same with LTE</div>
<svg style="position:absolute;left:574px;top:221px" width="12" height="12" shape-rendering="crispEdges"><rect x="4" y="0" width="4" height="1" fill="#a0a0a0"/><rect x="2" y="1" width="2" height="1" fill="#a0a0a0"/><rect x="4" y="1" width="4" height="1" fill="#696969"/><rect x="8" y="1" width="2" height="1" fill="#a0a0a0"/><rect x="1" y="2" width="1" height="1" fill="#a0a0a0"/><rect x="2" y="2" width="2" height="1" fill="#696969"/><rect x="4" y="2" width="4" height="1" fill="#fff"/><rect x="8" y="2" width="2" height="1" fill="#696969"/><rect x="10" y="2" width="1" height="1" fill="#ffffff"/><rect x="1" y="3" width="1" height="1" fill="#a0a0a0"/><rect x="2" y="3" width="1" height="1" fill="#696969"/><rect x="3" y="3" width="6" height="1" fill="#fff"/><rect x="9" y="3" width="1" height="1" fill="#e3e3e3"/><rect x="10" y="3" width="1" height="1" fill="#ffffff"/><rect x="0" y="4" width="1" height="1" fill="#a0a0a0"/><rect x="1" y="4" width="1" height="1" fill="#696969"/><rect x="2" y="4" width="8" height="1" fill="#fff"/><rect x="10" y="4" width="1" height="1" fill="#e3e3e3"/><rect x="11" y="4" width="1" height="1" fill="#ffffff"/><rect x="0" y="5" width="1" height="1" fill="#a0a0a0"/><rect x="1" y="5" width="1" height="1" fill="#696969"/><rect x="2" y="5" width="8" height="1" fill="#fff"/><rect x="10" y="5" width="1" height="1" fill="#e3e3e3"/><rect x="11" y="5" width="1" height="1" fill="#ffffff"/><rect x="0" y="6" width="1" height="1" fill="#a0a0a0"/><rect x="1" y="6" width="1" height="1" fill="#696969"/><rect x="2" y="6" width="8" height="1" fill="#fff"/><rect x="10" y="6" width="1" height="1" fill="#e3e3e3"/><rect x="11" y="6" width="1" height="1" fill="#ffffff"/><rect x="0" y="7" width="1" height="1" fill="#a0a0a0"/><rect x="1" y="7" width="1" height="1" fill="#696969"/><rect x="2" y="7" width="8" height="1" fill="#fff"/><rect x="10" y="7" width="1" height="1" fill="#e3e3e3"/><rect x="11" y="7" width="1" height="1" fill="#ffffff"/><rect x="1" y="8" width="1" height="1" fill="#a0a0a0"/><rect x="2" y="8" width="1" height="1" fill="#696969"/><rect x="3" y="8" width="6" height="1" fill="#fff"/><rect x="9" y="8" width="1" height="1" fill="#e3e3e3"/><rect x="10" y="8" width="1" height="1" fill="#ffffff"/><rect x="1" y="9" width="1" height="1" fill="#a0a0a0"/><rect x="2" y="9" width="2" height="1" fill="#e3e3e3"/><rect x="4" y="9" width="4" height="1" fill="#fff"/><rect x="8" y="9" width="2" height="1" fill="#e3e3e3"/><rect x="10" y="9" width="1" height="1" fill="#ffffff"/><rect x="2" y="10" width="2" height="1" fill="#ffffff"/><rect x="4" y="10" width="4" height="1" fill="#e3e3e3"/><rect x="8" y="10" width="2" height="1" fill="#ffffff"/><rect x="4" y="11" width="4" height="1" fill="#ffffff"/></svg>
<div class="t r" style="right:469px;top:220px;color:#000;transform:scaleX(0.92);transform-origin:100% 0">IMSI18:</div>
<div style="left:637px;top:217px;width:127px;height:18px;border:1px solid;border-color:#a0a0a0 #ffffff #ffffff #a0a0a0;background:#fff;box-shadow:inset 1px 1px #696969,inset -1px -1px #e3e3e3"></div>
<div class="t" style="left:641px;top:220px;color:#000;transform:scaleX(0.88);transform-origin:0 0">809510330000054321</div>
<svg style="position:absolute;left:774px;top:221px" width="12" height="12" shape-rendering="crispEdges"><rect x="4" y="0" width="4" height="1" fill="#a0a0a0"/><rect x="2" y="1" width="2" height="1" fill="#a0a0a0"/><rect x="4" y="1" width="4" height="1" fill="#696969"/><rect x="8" y="1" width="2" height="1" fill="#a0a0a0"/><rect x="1" y="2" width="1" height="1" fill="#a0a0a0"/><rect x="2" y="2" width="2" height="1" fill="#696969"/><rect x="4" y="2" width="4" height="1" fill="#fff"/><rect x="8" y="2" width="2" height="1" fill="#696969"/><rect x="10" y="2" width="1" height="1" fill="#ffffff"/><rect x="1" y="3" width="1" height="1" fill="#a0a0a0"/><rect x="2" y="3" width="1" height="1" fill="#696969"/><rect x="3" y="3" width="6" height="1" fill="#fff"/><rect x="9" y="3" width="1" height="1" fill="#e3e3e3"/><rect x="10" y="3" width="1" height="1" fill="#ffffff"/><rect x="0" y="4" width="1" height="1" fill="#a0a0a0"/><rect x="1" y="4" width="1" height="1" fill="#696969"/><rect x="2" y="4" width="8" height="1" fill="#fff"/><rect x="10" y="4" width="1" height="1" fill="#e3e3e3"/><rect x="11" y="4" width="1" height="1" fill="#ffffff"/><rect x="0" y="5" width="1" height="1" fill="#a0a0a0"/><rect x="1" y="5" width="1" height="1" fill="#696969"/><rect x="2" y="5" width="8" height="1" fill="#fff"/><rect x="10" y="5" width="1" height="1" fill="#e3e3e3"/><rect x="11" y="5" width="1" height="1" fill="#ffffff"/><rect x="0" y="6" width="1" height="1" fill="#a0a0a0"/><rect x="1" y="6" width="1" height="1" fill="#696969"/><rect x="2" y="6" width="8" height="1" fill="#fff"/><rect x="10" y="6" width="1" height="1" fill="#e3e3e3"/><rect x="11" y="6" width="1" height="1" fill="#ffffff"/><rect x="0" y="7" width="1" height="1" fill="#a0a0a0"/><rect x="1" y="7" width="1" height="1" fill="#696969"/><rect x="2" y="7" width="8" height="1" fill="#fff"/><rect x="10" y="7" width="1" height="1" fill="#e3e3e3"/><rect x="11" y="7" width="1" height="1" fill="#ffffff"/><rect x="1" y="8" width="1" height="1" fill="#a0a0a0"/><rect x="2" y="8" width="1" height="1" fill="#696969"/><rect x="3" y="8" width="6" height="1" fill="#fff"/><rect x="9" y="8" width="1" height="1" fill="#e3e3e3"/><rect x="10" y="8" width="1" height="1" fill="#ffffff"/><rect x="1" y="9" width="1" height="1" fill="#a0a0a0"/><rect x="2" y="9" width="2" height="1" fill="#e3e3e3"/><rect x="4" y="9" width="4" height="1" fill="#fff"/><rect x="8" y="9" width="2" height="1" fill="#e3e3e3"/><rect x="10" y="9" width="1" height="1" fill="#ffffff"/><rect x="2" y="10" width="2" height="1" fill="#ffffff"/><rect x="4" y="10" width="4" height="1" fill="#e3e3e3"/><rect x="8" y="10" width="2" height="1" fill="#ffffff"/><rect x="4" y="11" width="4" height="1" fill="#ffffff"/><rect x="5" y="4" width="2" height="4" fill="#000"/><rect x="4" y="5" width="4" height="2" fill="#000"/></svg>
<div class="t r" style="right:270px;top:220px;color:#000;transform:scaleX(0.92);transform-origin:100% 0">IMSI15:</div>
<div style="left:837px;top:217px;width:103px;height:18px;border:1px solid;border-color:#a0a0a0 #ffffff #ffffff #a0a0a0;background:#fff;box-shadow:inset 1px 1px #696969,inset -1px -1px #e3e3e3"></div>
<div class="t" style="left:841px;top:220px;color:#000;transform:scaleX(0.88);transform-origin:0 0">510330000054321</div>
<div style="left:949px;top:221px;width:11px;height:11px;border:1px solid;border-color:#a0a0a0 #ffffff #ffffff #a0a0a0;background:#fff;box-shadow:inset 1px 1px #696969,inset -1px -1px #e3e3e3"></div>
<div class="t" style="left:968px;top:220px;color:#000;transform:scaleX(0.88);transform-origin:0 0">Inc</div>
<div class="t" style="left:989px;top:220px;color:#000;transform:scaleX(0.91);transform-origin:0 0">(DEC18/15)</div>
<div class="t r" style="right:467px;top:245px;color:#000;transform:scaleX(0.88);transform-origin:100% 0">ACC:</div>
<div style="left:637px;top:241px;width:39px;height:18px;border:1px solid;border-color:#a0a0a0 #ffffff #ffffff #a0a0a0;background:#fff;box-shadow:inset 1px 1px #696969,inset -1px -1px #e3e3e3"></div>
<div class="t" style="left:641px;top:244px;color:#000;transform:scaleX(0.88);transform-origin:0 0">0002</div>
<div style="left:685px;top:245px;width:11px;height:11px;border:1px solid;border-color:#a0a0a0 #ffffff #ffffff #a0a0a0;background:#fff;box-shadow:inset 1px 1px #696969,inset -1px -1px #e3e3e3"></div>
<div class="t" style="left:704px;top:245px;color:#000;transform:scaleX(0.88);transform-origin:0 0">Input (DEC4)</div>
<div class="t r" style="right:268px;top:245px;color:#000;transform:scaleX(0.88);transform-origin:100% 0">AD:</div>
<div style="left:837px;top:241px;width:143px;height:18px;border:1px solid;border-color:#a0a0a0 #ffffff #ffffff #a0a0a0;background:#fff;box-shadow:inset 1px 1px #696969,inset -1px -1px #e3e3e3"></div>
<div class="t" style="left:841px;top:244px;color:#000;transform:scaleX(0.88);transform-origin:0 0">00000002</div>
<div style="left:981px;top:241px;width:39px;height:19px;border:1px solid;border-color:#ffffff #696969 #696969 #ffffff;background:#f0f0f0;box-shadow:inset 1px 1px #e3e3e3,inset -1px -1px #a0a0a0"></div>
<div class="t c" style="left:801px;width:400px;top:244px;color:#000;transform:scaleX(0.88);transform-origin:50% 0">...</div>
<div style="left:573px;top:269px;width:11px;height:11px;border:1px solid;border-color:#a0a0a0 #ffffff #ffffff #a0a0a0;background:#fff;box-shadow:inset 1px 1px #696969,inset -1px -1px #e3e3e3"></div>
<div class="t" style="left:591px;top:269px;color:#000;transform:scaleX(0.88);transform-origin:0 0">Inc</div>
<div class="t r" style="right:467px;top:269px;color:#000;transform:scaleX(0.88);transform-origin:100% 0">KI:</div>
<div style="left:637px;top:265px;width:343px;height:18px;border:1px solid;border-color:#a0a0a0 #ffffff #ffffff #a0a0a0;background:#c0dcc0;box-shadow:inset 1px 1px #696969,inset -1px -1px #e3e3e3"></div>
<div class="t" style="left:641px;top:268px;color:#000;transform:scaleX(0.88);transform-origin:0 0">465B5CE8B199B49FAA5F0A2EE238A6BD</div>
<div class="t" style="left:989px;top:269px;color:#000;transform:scaleX(0.88);transform-origin:0 0">(HEX32)</div>
<svg style="position:absolute;left:582px;top:295px" width="12" height="12" shape-rendering="crispEdges"><rect x="4" y="0" width="4" height="1" fill="#a0a0a0"/><rect x="2" y="1" width="2" height="1" fill="#a0a0a0"/><rect x="4" y="1" width="4" height="1" fill="#696969"/><rect x="8" y="1" width="2" height="1" fill="#a0a0a0"/><rect x="1" y="2" width="1" height="1" fill="#a0a0a0"/><rect x="2" y="2" width="2" height="1" fill="#696969"/><rect x="4" y="2" width="4" height="1" fill="#fff"/><rect x="8" y="2" width="2" height="1" fill="#696969"/><rect x="10" y="2" width="1" height="1" fill="#ffffff"/><rect x="1" y="3" width="1" height="1" fill="#a0a0a0"/><rect x="2" y="3" width="1" height="1" fill="#696969"/><rect x="3" y="3" width="6" height="1" fill="#fff"/><rect x="9" y="3" width="1" height="1" fill="#e3e3e3"/><rect x="10" y="3" width="1" height="1" fill="#ffffff"/><rect x="0" y="4" width="1" height="1" fill="#a0a0a0"/><rect x="1" y="4" width="1" height="1" fill="#696969"/><rect x="2" y="4" width="8" height="1" fill="#fff"/><rect x="10" y="4" width="1" height="1" fill="#e3e3e3"/><rect x="11" y="4" width="1" height="1" fill="#ffffff"/><rect x="0" y="5" width="1" height="1" fill="#a0a0a0"/><rect x="1" y="5" width="1" height="1" fill="#696969"/><rect x="2" y="5" width="8" height="1" fill="#fff"/><rect x="10" y="5" width="1" height="1" fill="#e3e3e3"/><rect x="11" y="5" width="1" height="1" fill="#ffffff"/><rect x="0" y="6" width="1" height="1" fill="#a0a0a0"/><rect x="1" y="6" width="1" height="1" fill="#696969"/><rect x="2" y="6" width="8" height="1" fill="#fff"/><rect x="10" y="6" width="1" height="1" fill="#e3e3e3"/><rect x="11" y="6" width="1" height="1" fill="#ffffff"/><rect x="0" y="7" width="1" height="1" fill="#a0a0a0"/><rect x="1" y="7" width="1" height="1" fill="#696969"/><rect x="2" y="7" width="8" height="1" fill="#fff"/><rect x="10" y="7" width="1" height="1" fill="#e3e3e3"/><rect x="11" y="7" width="1" height="1" fill="#ffffff"/><rect x="1" y="8" width="1" height="1" fill="#a0a0a0"/><rect x="2" y="8" width="1" height="1" fill="#696969"/><rect x="3" y="8" width="6" height="1" fill="#fff"/><rect x="9" y="8" width="1" height="1" fill="#e3e3e3"/><rect x="10" y="8" width="1" height="1" fill="#ffffff"/><rect x="1" y="9" width="1" height="1" fill="#a0a0a0"/><rect x="2" y="9" width="2" height="1" fill="#e3e3e3"/><rect x="4" y="9" width="4" height="1" fill="#fff"/><rect x="8" y="9" width="2" height="1" fill="#e3e3e3"/><rect x="10" y="9" width="1" height="1" fill="#ffffff"/><rect x="2" y="10" width="2" height="1" fill="#ffffff"/><rect x="4" y="10" width="4" height="1" fill="#e3e3e3"/><rect x="8" y="10" width="2" height="1" fill="#ffffff"/><rect x="4" y="11" width="4" height="1" fill="#ffffff"/><rect x="5" y="4" width="2" height="4" fill="#000"/><rect x="4" y="5" width="4" height="2" fill="#000"/></svg>
<div class="t" style="left:600px;top:294px;color:#000;transform:scaleX(0.85);transform-origin:0 0">OPC:</div>
<div style="left:637px;top:289px;width:343px;height:18px;border:1px solid;border-color:#a0a0a0 #ffffff #ffffff #a0a0a0;background:#c0dcc0;box-shadow:inset 1px 1px #696969,inset -1px -1px #e3e3e3"></div>
<div class="t" style="left:641px;top:292px;color:#000;transform:scaleX(0.88);transform-origin:0 0">E8ED289DEBA952E4283B54E88E6183CA</div>
<div class="t" style="left:989px;top:293px;color:#000;transform:scaleX(0.88);transform-origin:0 0">(HEX32)</div>
<svg style="position:absolute;left:582px;top:319px" width="12" height="12" shape-rendering="crispEdges"><rect x="4" y="0" width="4" height="1" fill="#a0a0a0"/><rect x="2" y="1" width="2" height="1" fill="#a0a0a0"/><rect x="4" y="1" width="4" height="1" fill="#696969"/><rect x="8" y="1" width="2" height="1" fill="#a0a0a0"/><rect x="1" y="2" width="1" height="1" fill="#a0a0a0"/><rect x="2" y="2" width="2" height="1" fill="#696969"/><rect x="4" y="2" width="4" height="1" fill="#fff"/><rect x="8" y="2" width="2" height="1" fill="#696969"/><rect x="10" y="2" width="1" height="1" fill="#ffffff"/><rect x="1" y="3" width="1" height="1" fill="#a0a0a0"/><rect x="2" y="3" width="1" height="1" fill="#696969"/><rect x="3" y="3" width="6" height="1" fill="#fff"/><rect x="9" y="3" width="1" height="1" fill="#e3e3e3"/><rect x="10" y="3" width="1" height="1" fill="#ffffff"/><rect x="0" y="4" width="1" height="1" fill="#a0a0a0"/><rect x="1" y="4" width="1" height="1" fill="#696969"/><rect x="2" y="4" width="8" height="1" fill="#fff"/><rect x="10" y="4" width="1" height="1" fill="#e3e3e3"/><rect x="11" y="4" width="1" height="1" fill="#ffffff"/><rect x="0" y="5" width="1" height="1" fill="#a0a0a0"/><rect x="1" y="5" width="1" height="1" fill="#696969"/><rect x="2" y="5" width="8" height="1" fill="#fff"/><rect x="10" y="5" width="1" height="1" fill="#e3e3e3"/><rect x="11" y="5" width="1" height="1" fill="#ffffff"/><rect x="0" y="6" width="1" height="1" fill="#a0a0a0"/><rect x="1" y="6" width="1" height="1" fill="#696969"/><rect x="2" y="6" width="8" height="1" fill="#fff"/><rect x="10" y="6" width="1" height="1" fill="#e3e3e3"/><rect x="11" y="6" width="1" height="1" fill="#ffffff"/><rect x="0" y="7" width="1" height="1" fill="#a0a0a0"/><rect x="1" y="7" width="1" height="1" fill="#696969"/><rect x="2" y="7" width="8" height="1" fill="#fff"/><rect x="10" y="7" width="1" height="1" fill="#e3e3e3"/><rect x="11" y="7" width="1" height="1" fill="#ffffff"/><rect x="1" y="8" width="1" height="1" fill="#a0a0a0"/><rect x="2" y="8" width="1" height="1" fill="#696969"/><rect x="3" y="8" width="6" height="1" fill="#fff"/><rect x="9" y="8" width="1" height="1" fill="#e3e3e3"/><rect x="10" y="8" width="1" height="1" fill="#ffffff"/><rect x="1" y="9" width="1" height="1" fill="#a0a0a0"/><rect x="2" y="9" width="2" height="1" fill="#e3e3e3"/><rect x="4" y="9" width="4" height="1" fill="#fff"/><rect x="8" y="9" width="2" height="1" fill="#e3e3e3"/><rect x="10" y="9" width="1" height="1" fill="#ffffff"/><rect x="2" y="10" width="2" height="1" fill="#ffffff"/><rect x="4" y="10" width="4" height="1" fill="#e3e3e3"/><rect x="8" y="10" width="2" height="1" fill="#ffffff"/><rect x="4" y="11" width="4" height="1" fill="#ffffff"/></svg>
<div class="t" style="left:605px;top:318px;color:#000;transform:scaleX(0.88);transform-origin:0 0">OP:</div>
<div style="left:637px;top:313px;width:343px;height:18px;border:1px solid;border-color:#a0a0a0 #ffffff #ffffff #a0a0a0;background:#c0dcc0;box-shadow:inset 1px 1px #696969,inset -1px -1px #e3e3e3"></div>
<div class="t" style="left:989px;top:317px;color:#000;transform:scaleX(0.88);transform-origin:0 0">(HEX32)</div>
<div class="t r" style="right:467px;top:341px;color:#000;transform:scaleX(0.93);transform-origin:100% 0">PLMNwAct:</div>
<div style="left:637px;top:337px;width:343px;height:18px;border:1px solid;border-color:#a0a0a0 #ffffff #ffffff #a0a0a0;background:#fff;box-shadow:inset 1px 1px #696969,inset -1px -1px #e3e3e3"></div>
<div class="t" style="left:641px;top:340px;color:#000;transform:scaleX(0.895);transform-origin:0 0">51033:4000; 51033:8000; 51033:0080</div>
<div style="left:981px;top:337px;width:38px;height:19px;border:1px solid;border-color:#ffffff #696969 #696969 #ffffff;background:#f0f0f0;box-shadow:inset 1px 1px #e3e3e3,inset -1px -1px #a0a0a0"></div>
<div class="t c" style="left:801px;width:400px;top:340px;color:#000;transform:scaleX(0.88);transform-origin:50% 0">...</div>
<div class="t r" style="right:467px;top:365px;color:#000;transform:scaleX(0.93);transform-origin:100% 0">OPLMNwAct:</div>
<div style="left:637px;top:361px;width:343px;height:18px;border:1px solid;border-color:#a0a0a0 #ffffff #ffffff #a0a0a0;background:#fff;box-shadow:inset 1px 1px #696969,inset -1px -1px #e3e3e3"></div>
<div class="t" style="left:641px;top:364px;color:#000;transform:scaleX(0.895);transform-origin:0 0">51033:4000; 51033:8000</div>
<div style="left:981px;top:361px;width:38px;height:19px;border:1px solid;border-color:#ffffff #696969 #696969 #ffffff;background:#f0f0f0;box-shadow:inset 1px 1px #e3e3e3,inset -1px -1px #a0a0a0"></div>
<div class="t c" style="left:801px;width:400px;top:364px;color:#000;transform:scaleX(0.88);transform-origin:50% 0">...</div>
<div class="t r" style="right:467px;top:389px;color:#000;transform:scaleX(0.93);transform-origin:100% 0">HPLMNwAct:</div>
<div style="left:637px;top:385px;width:343px;height:18px;border:1px solid;border-color:#a0a0a0 #ffffff #ffffff #a0a0a0;background:#fff;box-shadow:inset 1px 1px #696969,inset -1px -1px #e3e3e3"></div>
<div class="t" style="left:641px;top:388px;color:#000;transform:scaleX(0.895);transform-origin:0 0">51033:4000; 51033:8000; 51033:0080</div>
<div style="left:981px;top:385px;width:38px;height:19px;border:1px solid;border-color:#ffffff #696969 #696969 #ffffff;background:#f0f0f0;box-shadow:inset 1px 1px #e3e3e3,inset -1px -1px #a0a0a0"></div>
<div class="t c" style="left:801px;width:400px;top:388px;color:#000;transform:scaleX(0.88);transform-origin:50% 0">...</div>
<div class="t r" style="right:467px;top:413px;color:#000;transform:scaleX(0.93);transform-origin:100% 0">EHPLMN:</div>
<div style="left:637px;top:409px;width:343px;height:18px;border:1px solid;border-color:#a0a0a0 #ffffff #ffffff #a0a0a0;background:#fff;box-shadow:inset 1px 1px #696969,inset -1px -1px #e3e3e3"></div>
<div class="t" style="left:641px;top:412px;color:#000;transform:scaleX(0.88);transform-origin:0 0">51033</div>
<div style="left:981px;top:409px;width:38px;height:19px;border:1px solid;border-color:#ffffff #696969 #696969 #ffffff;background:#f0f0f0;box-shadow:inset 1px 1px #e3e3e3,inset -1px -1px #a0a0a0"></div>
<div class="t c" style="left:801px;width:400px;top:412px;color:#000;transform:scaleX(0.88);transform-origin:50% 0">...</div>
<div class="t r" style="right:467px;top:437px;color:#000;transform:scaleX(0.93);transform-origin:100% 0">FPLMN:</div>
<div style="left:637px;top:433px;width:343px;height:18px;border:1px solid;border-color:#a0a0a0 #ffffff #ffffff #a0a0a0;background:#fff;box-shadow:inset 1px 1px #696969,inset -1px -1px #e3e3e3"></div>
<div class="t" style="left:641px;top:436px;color:#000;transform:scaleX(0.895);transform-origin:0 0">51001; 51010; 51011; 51089</div>
<div style="left:981px;top:433px;width:39px;height:19px;border:1px solid;border-color:#ffffff #696969 #696969 #ffffff;background:#f0f0f0;box-shadow:inset 1px 1px #e3e3e3,inset -1px -1px #a0a0a0"></div>
<div class="t c" style="left:801px;width:400px;top:436px;color:#000;transform:scaleX(0.88);transform-origin:50% 0">...</div>
<div style="left:1022px;top:337px;width:30px;height:91px;border:1px solid;border-color:#ffffff #696969 #696969 #ffffff;background:#f0f0f0;box-shadow:inset 1px 1px #e3e3e3,inset -1px -1px #a0a0a0"></div>
<div class="t c" style="left:838px;width:400px;top:376px;color:#000;transform:scaleX(0.88);transform-origin:50% 0">Auto</div>
<div class="t r" style="right:467px;top:461px;color:#000;transform:scaleX(0.93);transform-origin:100% 0">HPPLMN:</div>
<div style="left:637px;top:457px;width:31px;height:18px;border:1px solid;border-color:#a0a0a0 #ffffff #ffffff #a0a0a0;background:#fff;box-shadow:inset 1px 1px #696969,inset -1px -1px #e3e3e3"></div>
<div class="t" style="left:641px;top:460px;color:#000;transform:scaleX(0.88);transform-origin:0 0">50</div>
<div class="t" style="left:670px;top:461px;color:#000;transform:scaleX(0.88);transform-origin:0 0">(HEX2)</div>
<div class="t r" style="right:332px;top:461px;color:#000;transform:scaleX(0.88);transform-origin:100% 0">GID1:</div>
<div style="left:773px;top:457px;width:79px;height:18px;border:1px solid;border-color:#a0a0a0 #ffffff #ffffff #a0a0a0;background:#fff;box-shadow:inset 1px 1px #696969,inset -1px -1px #e3e3e3"></div>
<div class="t r" style="right:204px;top:461px;color:#000;transform:scaleX(0.88);transform-origin:100% 0">GID2:</div>
<div style="left:901px;top:457px;width:79px;height:18px;border:1px solid;border-color:#a0a0a0 #ffffff #ffffff #a0a0a0;background:#fff;box-shadow:inset 1px 1px #696969,inset -1px -1px #e3e3e3"></div>
<div class="t" style="left:989px;top:461px;color:#000;transform:scaleX(0.88);transform-origin:0 0">(HEX)</div>
<div class="t r" style="right:467px;top:485px;color:#000;transform:scaleX(0.88);transform-origin:100% 0">SMSP:</div>
<div style="left:637px;top:481px;width:111px;height:18px;border:1px solid;border-color:#a0a0a0 #ffffff #ffffff #a0a0a0;background:#fff;box-shadow:inset 1px 1px #696969,inset -1px -1px #e3e3e3"></div>
<div class="t" style="left:641px;top:484px;color:#000;transform:scaleX(0.88);transform-origin:0 0">+</div>
<div class="t" style="left:749px;top:485px;color:#000;transform:scaleX(0.88);transform-origin:0 0">(ASC)</div>
<div class="t r" style="right:260px;top:485px;color:#000;transform:scaleX(0.9);transform-origin:100% 0">MSISDN:</div>
<div style="left:845px;top:481px;width:95px;height:18px;border:1px solid;border-color:#a0a0a0 #ffffff #ffffff #a0a0a0;background:#fff;box-shadow:inset 1px 1px #696969,inset -1px -1px #e3e3e3"></div>
<div style="left:941px;top:485px;width:11px;height:11px;border:1px solid;border-color:#a0a0a0 #ffffff #ffffff #a0a0a0;background:#fff;box-shadow:inset 1px 1px #696969,inset -1px -1px #e3e3e3"></div>
<div class="t" style="left:960px;top:484px;color:#000;transform:scaleX(0.88);transform-origin:0 0">Inc</div>
<div class="t" style="left:989px;top:485px;color:#000;transform:scaleX(0.88);transform-origin:0 0">(ASC)</div>
<div class="t r" style="right:467px;top:509px;color:#000;transform:scaleX(0.88);transform-origin:100% 0">SPN:</div>
<div style="left:637px;top:505px;width:343px;height:18px;border:1px solid;border-color:#a0a0a0 #ffffff #ffffff #a0a0a0;background:#fff;box-shadow:inset 1px 1px #696969,inset -1px -1px #e3e3e3"></div>
<div class="t" style="left:641px;top:508px;color:#000;transform:scaleX(0.88);transform-origin:0 0">Tangselkom</div>
<div class="t" style="left:989px;top:509px;color:#000;transform:scaleX(0.88);transform-origin:0 0">(ASC)</div>
<div class="t r" style="right:467px;top:533px;color:#000;transform:scaleX(0.88);transform-origin:100% 0">ECC:</div>
<div style="left:637px;top:529px;width:343px;height:18px;border:1px solid;border-color:#a0a0a0 #ffffff #ffffff #a0a0a0;background:#fff;box-shadow:inset 1px 1px #696969,inset -1px -1px #e3e3e3"></div>
<div style="left:981px;top:529px;width:39px;height:19px;border:1px solid;border-color:#ffffff #696969 #696969 #ffffff;background:#f0f0f0;box-shadow:inset 1px 1px #e3e3e3,inset -1px -1px #a0a0a0"></div>
<div class="t c" style="left:801px;width:400px;top:532px;color:#000;transform:scaleX(0.88);transform-origin:50% 0">...</div>
<div class="t r" style="right:467px;top:565px;color:#000;transform:scaleX(0.88);transform-origin:100% 0">Algorithm:</div>
<svg style="position:absolute;left:638px;top:566px" width="12" height="12" shape-rendering="crispEdges"><rect x="4" y="0" width="4" height="1" fill="#a0a0a0"/><rect x="2" y="1" width="2" height="1" fill="#a0a0a0"/><rect x="4" y="1" width="4" height="1" fill="#696969"/><rect x="8" y="1" width="2" height="1" fill="#a0a0a0"/><rect x="1" y="2" width="1" height="1" fill="#a0a0a0"/><rect x="2" y="2" width="2" height="1" fill="#696969"/><rect x="4" y="2" width="4" height="1" fill="#fff"/><rect x="8" y="2" width="2" height="1" fill="#696969"/><rect x="10" y="2" width="1" height="1" fill="#ffffff"/><rect x="1" y="3" width="1" height="1" fill="#a0a0a0"/><rect x="2" y="3" width="1" height="1" fill="#696969"/><rect x="3" y="3" width="6" height="1" fill="#fff"/><rect x="9" y="3" width="1" height="1" fill="#e3e3e3"/><rect x="10" y="3" width="1" height="1" fill="#ffffff"/><rect x="0" y="4" width="1" height="1" fill="#a0a0a0"/><rect x="1" y="4" width="1" height="1" fill="#696969"/><rect x="2" y="4" width="8" height="1" fill="#fff"/><rect x="10" y="4" width="1" height="1" fill="#e3e3e3"/><rect x="11" y="4" width="1" height="1" fill="#ffffff"/><rect x="0" y="5" width="1" height="1" fill="#a0a0a0"/><rect x="1" y="5" width="1" height="1" fill="#696969"/><rect x="2" y="5" width="8" height="1" fill="#fff"/><rect x="10" y="5" width="1" height="1" fill="#e3e3e3"/><rect x="11" y="5" width="1" height="1" fill="#ffffff"/><rect x="0" y="6" width="1" height="1" fill="#a0a0a0"/><rect x="1" y="6" width="1" height="1" fill="#696969"/><rect x="2" y="6" width="8" height="1" fill="#fff"/><rect x="10" y="6" width="1" height="1" fill="#e3e3e3"/><rect x="11" y="6" width="1" height="1" fill="#ffffff"/><rect x="0" y="7" width="1" height="1" fill="#a0a0a0"/><rect x="1" y="7" width="1" height="1" fill="#696969"/><rect x="2" y="7" width="8" height="1" fill="#fff"/><rect x="10" y="7" width="1" height="1" fill="#e3e3e3"/><rect x="11" y="7" width="1" height="1" fill="#ffffff"/><rect x="1" y="8" width="1" height="1" fill="#a0a0a0"/><rect x="2" y="8" width="1" height="1" fill="#696969"/><rect x="3" y="8" width="6" height="1" fill="#fff"/><rect x="9" y="8" width="1" height="1" fill="#e3e3e3"/><rect x="10" y="8" width="1" height="1" fill="#ffffff"/><rect x="1" y="9" width="1" height="1" fill="#a0a0a0"/><rect x="2" y="9" width="2" height="1" fill="#e3e3e3"/><rect x="4" y="9" width="4" height="1" fill="#fff"/><rect x="8" y="9" width="2" height="1" fill="#e3e3e3"/><rect x="10" y="9" width="1" height="1" fill="#ffffff"/><rect x="2" y="10" width="2" height="1" fill="#ffffff"/><rect x="4" y="10" width="4" height="1" fill="#e3e3e3"/><rect x="8" y="10" width="2" height="1" fill="#ffffff"/><rect x="4" y="11" width="4" height="1" fill="#ffffff"/><rect x="5" y="4" width="2" height="4" fill="#000"/><rect x="4" y="5" width="4" height="2" fill="#000"/></svg>
<div class="t" style="left:656px;top:565px;color:#000;transform:scaleX(0.88);transform-origin:0 0">Milenage</div>
<svg style="position:absolute;left:702px;top:566px" width="12" height="12" shape-rendering="crispEdges"><rect x="4" y="0" width="4" height="1" fill="#a0a0a0"/><rect x="2" y="1" width="2" height="1" fill="#a0a0a0"/><rect x="4" y="1" width="4" height="1" fill="#696969"/><rect x="8" y="1" width="2" height="1" fill="#a0a0a0"/><rect x="1" y="2" width="1" height="1" fill="#a0a0a0"/><rect x="2" y="2" width="2" height="1" fill="#696969"/><rect x="4" y="2" width="4" height="1" fill="#f0f0f0"/><rect x="8" y="2" width="2" height="1" fill="#696969"/><rect x="10" y="2" width="1" height="1" fill="#ffffff"/><rect x="1" y="3" width="1" height="1" fill="#a0a0a0"/><rect x="2" y="3" width="1" height="1" fill="#696969"/><rect x="3" y="3" width="6" height="1" fill="#f0f0f0"/><rect x="9" y="3" width="1" height="1" fill="#e3e3e3"/><rect x="10" y="3" width="1" height="1" fill="#ffffff"/><rect x="0" y="4" width="1" height="1" fill="#a0a0a0"/><rect x="1" y="4" width="1" height="1" fill="#696969"/><rect x="2" y="4" width="8" height="1" fill="#f0f0f0"/><rect x="10" y="4" width="1" height="1" fill="#e3e3e3"/><rect x="11" y="4" width="1" height="1" fill="#ffffff"/><rect x="0" y="5" width="1" height="1" fill="#a0a0a0"/><rect x="1" y="5" width="1" height="1" fill="#696969"/><rect x="2" y="5" width="8" height="1" fill="#f0f0f0"/><rect x="10" y="5" width="1" height="1" fill="#e3e3e3"/><rect x="11" y="5" width="1" height="1" fill="#ffffff"/><rect x="0" y="6" width="1" height="1" fill="#a0a0a0"/><rect x="1" y="6" width="1" height="1" fill="#696969"/><rect x="2" y="6" width="8" height="1" fill="#f0f0f0"/><rect x="10" y="6" width="1" height="1" fill="#e3e3e3"/><rect x="11" y="6" width="1" height="1" fill="#ffffff"/><rect x="0" y="7" width="1" height="1" fill="#a0a0a0"/><rect x="1" y="7" width="1" height="1" fill="#696969"/><rect x="2" y="7" width="8" height="1" fill="#f0f0f0"/><rect x="10" y="7" width="1" height="1" fill="#e3e3e3"/><rect x="11" y="7" width="1" height="1" fill="#ffffff"/><rect x="1" y="8" width="1" height="1" fill="#a0a0a0"/><rect x="2" y="8" width="1" height="1" fill="#696969"/><rect x="3" y="8" width="6" height="1" fill="#f0f0f0"/><rect x="9" y="8" width="1" height="1" fill="#e3e3e3"/><rect x="10" y="8" width="1" height="1" fill="#ffffff"/><rect x="1" y="9" width="1" height="1" fill="#a0a0a0"/><rect x="2" y="9" width="2" height="1" fill="#e3e3e3"/><rect x="4" y="9" width="4" height="1" fill="#f0f0f0"/><rect x="8" y="9" width="2" height="1" fill="#e3e3e3"/><rect x="10" y="9" width="1" height="1" fill="#ffffff"/><rect x="2" y="10" width="2" height="1" fill="#ffffff"/><rect x="4" y="10" width="4" height="1" fill="#e3e3e3"/><rect x="8" y="10" width="2" height="1" fill="#ffffff"/><rect x="4" y="11" width="4" height="1" fill="#ffffff"/></svg>
<div class="t" style="left:718px;top:565px;color:#787878;transform:scaleX(0.88);transform-origin:0 0">XOR</div>
<div style="left:757px;top:561px;width:71px;height:23px;border:1px solid;border-color:#ffffff #696969 #696969 #ffffff;background:#f0f0f0;box-shadow:inset 1px 1px #e3e3e3,inset -1px -1px #a0a0a0"></div>
<div class="t c" style="left:593px;width:400px;top:566px;color:#000;transform:scaleX(0.88);transform-origin:50% 0">R&amp;C Para</div>
<div style="left:845px;top:561px;width:73px;height:23px;border:1px solid;border-color:#ffffff #696969 #696969 #ffffff;background:#f0f0f0;box-shadow:inset 1px 1px #e3e3e3,inset -1px -1px #a0a0a0"></div>
<div class="t c" style="left:682px;width:400px;top:566px;color:#000;transform:scaleX(0.88);transform-origin:50% 0">Other files</div>
<div style="left:933px;top:561px;width:87px;height:23px;border:1px solid;border-color:#ffffff #696969 #696969 #ffffff;background:#f0f0f0;box-shadow:inset 1px 1px #e3e3e3,inset -1px -1px #a0a0a0"></div>
<div class="t c" style="left:777px;width:400px;top:566px;color:#000;transform:scaleX(0.88);transform-origin:50% 0">Same with GSM</div>
<div style="left:1px;top:694px;width:298px;height:25px;border:1px solid;border-color:#a0a0a0 #ffffff #ffffff #a0a0a0"></div>
<div style="left:303px;top:694px;width:791px;height:25px;border:1px solid;border-color:#a0a0a0 #ffffff #ffffff #a0a0a0"></div>
<div class="tt" style="left:99px;top:700px;transform:scaleX(0.92)">Read Card Success!</div>
<div style="left:306px;top:707px;width:6px;height:1px;background:#000"></div>
<div style="left:306px;top:710px;width:6px;height:1px;background:#000"></div>
<div style="left:314px;top:707px;width:6px;height:1px;background:#000"></div>
<div style="left:314px;top:710px;width:6px;height:1px;background:#000"></div>
<div style="left:322px;top:707px;width:6px;height:1px;background:#000"></div>
<div style="left:322px;top:710px;width:6px;height:1px;background:#000"></div>
<div style="left:330px;top:707px;width:6px;height:1px;background:#000"></div>
<div style="left:330px;top:710px;width:6px;height:1px;background:#000"></div>
<div style="left:338px;top:707px;width:6px;height:1px;background:#000"></div>
<div style="left:338px;top:710px;width:6px;height:1px;background:#000"></div>
<div style="left:346px;top:707px;width:6px;height:1px;background:#000"></div>
<div style="left:346px;top:710px;width:6px;height:1px;background:#000"></div>
<div style="left:354px;top:707px;width:6px;height:1px;background:#000"></div>
<div style="left:354px;top:710px;width:6px;height:1px;background:#000"></div>
<div style="left:362px;top:707px;width:6px;height:1px;background:#000"></div>
<div style="left:362px;top:710px;width:6px;height:1px;background:#000"></div>
<div style="left:370px;top:707px;width:6px;height:1px;background:#000"></div>
<div style="left:370px;top:710px;width:6px;height:1px;background:#000"></div>
<div style="left:378px;top:707px;width:6px;height:1px;background:#000"></div>
<div style="left:378px;top:710px;width:6px;height:1px;background:#000"></div>
<div style="left:386px;top:707px;width:6px;height:1px;background:#000"></div>
<div style="left:386px;top:710px;width:6px;height:1px;background:#000"></div>
<div style="left:394px;top:707px;width:6px;height:1px;background:#000"></div>
<div style="left:394px;top:710px;width:6px;height:1px;background:#000"></div>
<div style="left:402px;top:707px;width:6px;height:1px;background:#000"></div>
<div style="left:402px;top:710px;width:6px;height:1px;background:#000"></div>
<div style="left:410px;top:707px;width:6px;height:1px;background:#000"></div>
<div style="left:410px;top:710px;width:6px;height:1px;background:#000"></div>
<div style="left:418px;top:707px;width:6px;height:1px;background:#000"></div>
<div style="left:418px;top:710px;width:6px;height:1px;background:#000"></div>
<div style="left:426px;top:707px;width:6px;height:1px;background:#000"></div>
<div style="left:426px;top:710px;width:6px;height:1px;background:#000"></div>
<div style="left:434px;top:707px;width:6px;height:1px;background:#000"></div>
<div style="left:434px;top:710px;width:6px;height:1px;background:#000"></div>
<div style="left:442px;top:707px;width:6px;height:1px;background:#000"></div>
<div style="left:442px;top:710px;width:6px;height:1px;background:#000"></div>
<div style="left:450px;top:707px;width:6px;height:1px;background:#000"></div>
<div style="left:450px;top:710px;width:6px;height:1px;background:#000"></div>
<div style="left:458px;top:707px;width:6px;height:1px;background:#000"></div>
<div style="left:458px;top:710px;width:6px;height:1px;background:#000"></div>
<div style="left:466px;top:707px;width:6px;height:1px;background:#000"></div>
<div style="left:466px;top:710px;width:6px;height:1px;background:#000"></div>
<div style="left:474px;top:707px;width:6px;height:1px;background:#000"></div>
<div style="left:474px;top:710px;width:6px;height:1px;background:#000"></div>
<div style="left:482px;top:707px;width:6px;height:1px;background:#000"></div>
<div style="left:482px;top:710px;width:6px;height:1px;background:#000"></div>
<div style="left:490px;top:707px;width:6px;height:1px;background:#000"></div>
<div style="left:490px;top:710px;width:6px;height:1px;background:#000"></div>
<div style="left:498px;top:707px;width:6px;height:1px;background:#000"></div>
<div style="left:498px;top:710px;width:6px;height:1px;background:#000"></div>
<div style="left:506px;top:707px;width:6px;height:1px;background:#000"></div>
<div style="left:506px;top:710px;width:6px;height:1px;background:#000"></div>
<div style="left:514px;top:707px;width:6px;height:1px;background:#000"></div>
<div style="left:514px;top:710px;width:6px;height:1px;background:#000"></div>
<div style="left:522px;top:707px;width:6px;height:1px;background:#000"></div>
<div style="left:522px;top:710px;width:6px;height:1px;background:#000"></div>
<div style="left:530px;top:707px;width:6px;height:1px;background:#000"></div>
<div style="left:530px;top:710px;width:6px;height:1px;background:#000"></div>
<div style="left:538px;top:707px;width:6px;height:1px;background:#000"></div>
<div style="left:538px;top:710px;width:6px;height:1px;background:#000"></div>
<div style="left:546px;top:707px;width:6px;height:1px;background:#000"></div>
<div style="left:546px;top:710px;width:6px;height:1px;background:#000"></div>
<div style="left:554px;top:707px;width:6px;height:1px;background:#000"></div>
<div style="left:554px;top:710px;width:6px;height:1px;background:#000"></div>
<div style="left:562px;top:707px;width:6px;height:1px;background:#000"></div>
<div style="left:562px;top:710px;width:6px;height:1px;background:#000"></div>
<div style="left:570px;top:707px;width:6px;height:1px;background:#000"></div>
<div style="left:570px;top:710px;width:6px;height:1px;background:#000"></div>
<div style="left:578px;top:707px;width:6px;height:1px;background:#000"></div>
<div style="left:578px;top:710px;width:6px;height:1px;background:#000"></div>
<div style="left:586px;top:707px;width:6px;height:1px;background:#000"></div>
<div style="left:586px;top:710px;width:6px;height:1px;background:#000"></div>
<div style="left:594px;top:707px;width:6px;height:1px;background:#000"></div>
<div style="left:594px;top:710px;width:6px;height:1px;background:#000"></div>
<div style="left:0px;top:0px;width:1px;height:722px;background:#1c1c1c"></div>
<div style="left:1096px;top:0px;width:2px;height:722px;background:#1c1c1c"></div>
<div style="left:0px;top:721px;width:1098px;height:1px;background:#1c1c1c"></div>
</body></html>
